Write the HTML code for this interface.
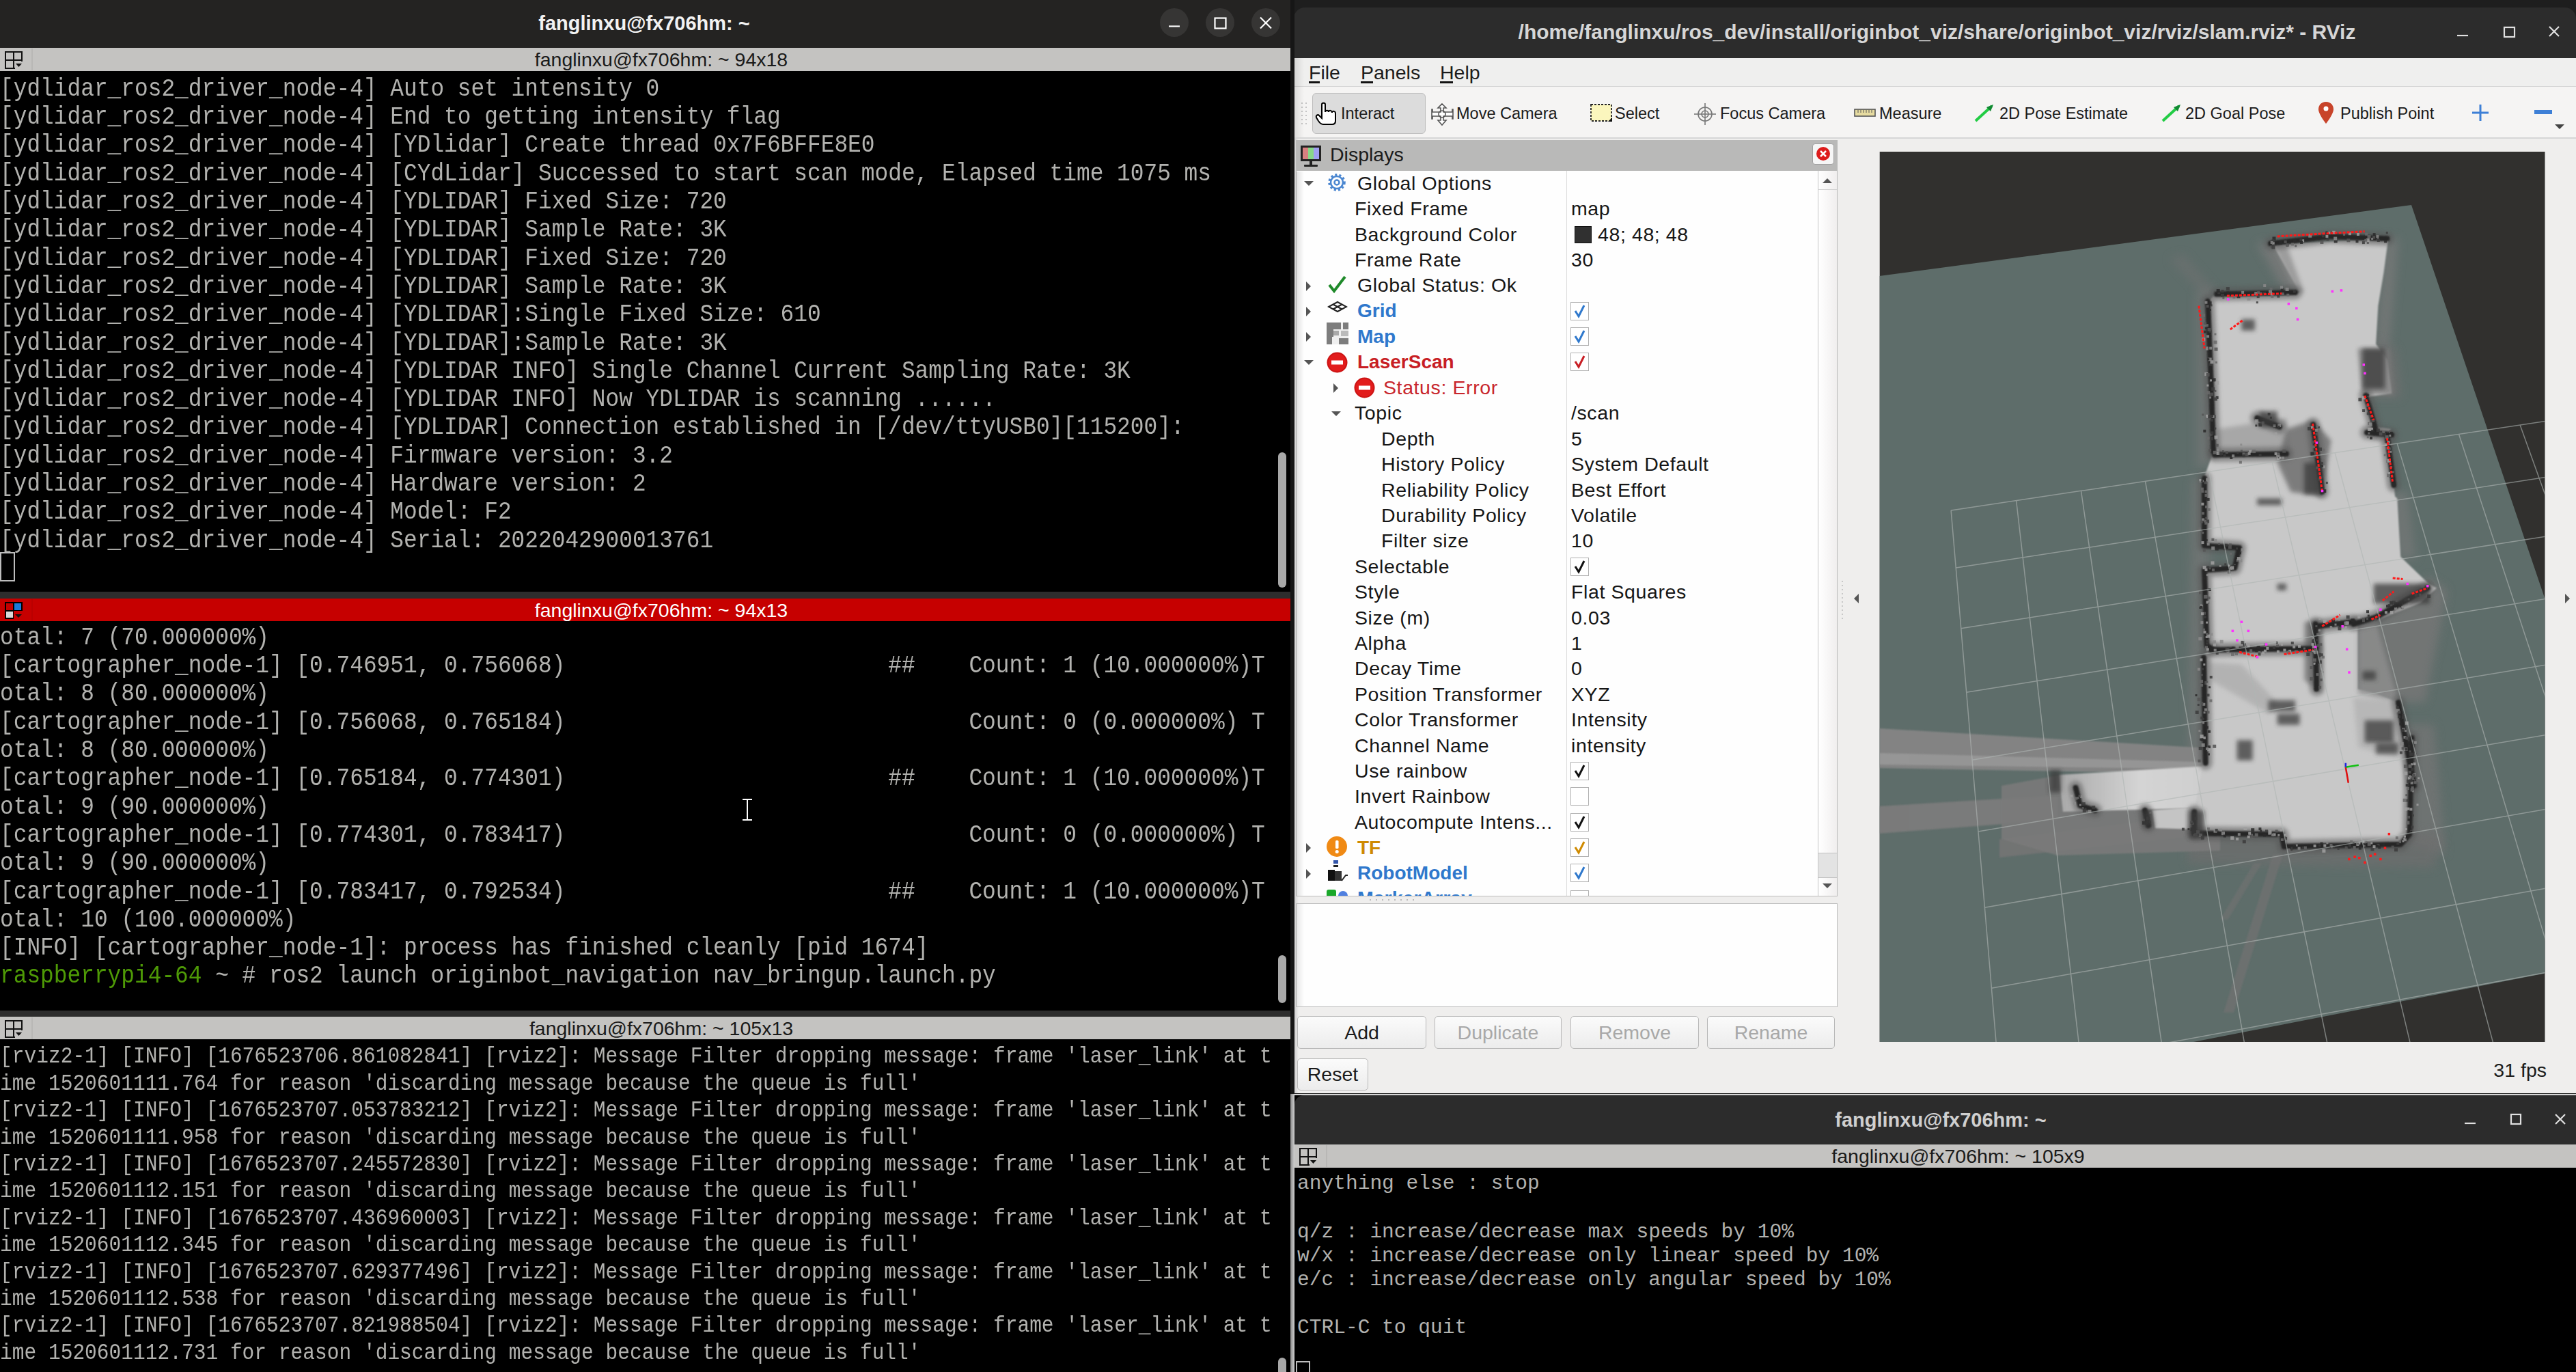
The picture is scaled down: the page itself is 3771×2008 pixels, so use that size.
<!DOCTYPE html><html><head><meta charset="utf-8"><style>html,body{margin:0;padding:0;width:3771px;height:2008px;overflow:hidden;background:#000;position:relative}div{box-sizing:border-box}</style></head><body><div style="position:absolute;left:0px;top:0px;width:1889px;height:70px;background:#242322"></div>
<div style="position:absolute;left:-1057px;width:4000px;text-align:center;top:19.95px;font:bold 29px/29px 'Liberation Sans', sans-serif;color:#f2f2f2;white-space:pre;">fanglinxu@fx706hm: ~</div>
<div style="position:absolute;left:1698px;top:12px;width:42px;height:42px;border-radius:50%;background:#363534"></div>
<div style="position:absolute;left:1765px;top:12px;width:42px;height:42px;border-radius:50%;background:#363534"></div>
<div style="position:absolute;left:1832px;top:12px;width:42px;height:42px;border-radius:50%;background:#363534"></div>
<svg style="position:absolute;left:0;top:0" width="1889" height="70"><g stroke="#ffffff" stroke-width="2.2" fill="none"><line x1="1711" y1="38.5" x2="1727" y2="38.5"/><rect x="1778.5" y="26.5" width="16" height="15"/><line x1="1845" y1="25.5" x2="1861" y2="41.5"/><line x1="1861" y1="25.5" x2="1845" y2="41.5"/></g></svg>
<div style="position:absolute;left:0px;top:70px;width:1889px;height:34px;background:#c4c3c1"></div>
<div style="position:absolute;left:46px;top:71px;width:2px;height:32px;background:rgba(0,0,0,0.06)"></div>
<svg style="position:absolute;left:7px;top:75px" width="28" height="28"><g stroke="#111" stroke-width="2" fill="none"><rect x="1" y="1" width="24" height="24"/><line x1="13" y1="1" x2="13" y2="25"/><line x1="1" y1="13" x2="25" y2="13"/></g><rect x="15" y="15" width="11" height="11" fill="#c4c3c1"/><path d="M16 18 L25 18 L20.5 23 Z" fill="#111"/></svg>
<div style="position:absolute;left:-1032.0px;width:4000px;text-align:center;top:72.87px;font:normal 28.5px/28.5px 'Liberation Sans', sans-serif;color:#1a1a1a;white-space:pre;">fanglinxu@fx706hm: ~ 94x18</div>
<div style="position:absolute;left:0px;top:104px;width:1889px;height:762px;background:#000"></div>
<div style="position:absolute;left:0px;top:115.83px;font:32.85px/32.85px 'Liberation Mono', monospace;letter-spacing:0px;color:#b2b2af;white-space:pre;transform:scaleY(1.1);transform-origin:0 25.17px;">[ydlidar_ros2_driver_node-4] Auto set intensity 0</div>
<div style="position:absolute;left:0px;top:157.13px;font:32.85px/32.85px 'Liberation Mono', monospace;letter-spacing:0px;color:#b2b2af;white-space:pre;transform:scaleY(1.1);transform-origin:0 25.17px;">[ydlidar_ros2_driver_node-4] End to getting intensity flag</div>
<div style="position:absolute;left:0px;top:198.43px;font:32.85px/32.85px 'Liberation Mono', monospace;letter-spacing:0px;color:#b2b2af;white-space:pre;transform:scaleY(1.1);transform-origin:0 25.17px;">[ydlidar_ros2_driver_node-4] [YDlidar] Create thread 0x7F6BFFE8E0</div>
<div style="position:absolute;left:0px;top:239.73px;font:32.85px/32.85px 'Liberation Mono', monospace;letter-spacing:0px;color:#b2b2af;white-space:pre;transform:scaleY(1.1);transform-origin:0 25.17px;">[ydlidar_ros2_driver_node-4] [CYdLidar] Successed to start scan mode, Elapsed time 1075 ms</div>
<div style="position:absolute;left:0px;top:281.03px;font:32.85px/32.85px 'Liberation Mono', monospace;letter-spacing:0px;color:#b2b2af;white-space:pre;transform:scaleY(1.1);transform-origin:0 25.17px;">[ydlidar_ros2_driver_node-4] [YDLIDAR] Fixed Size: 720</div>
<div style="position:absolute;left:0px;top:322.33px;font:32.85px/32.85px 'Liberation Mono', monospace;letter-spacing:0px;color:#b2b2af;white-space:pre;transform:scaleY(1.1);transform-origin:0 25.17px;">[ydlidar_ros2_driver_node-4] [YDLIDAR] Sample Rate: 3K</div>
<div style="position:absolute;left:0px;top:363.63px;font:32.85px/32.85px 'Liberation Mono', monospace;letter-spacing:0px;color:#b2b2af;white-space:pre;transform:scaleY(1.1);transform-origin:0 25.17px;">[ydlidar_ros2_driver_node-4] [YDLIDAR] Fixed Size: 720</div>
<div style="position:absolute;left:0px;top:404.93px;font:32.85px/32.85px 'Liberation Mono', monospace;letter-spacing:0px;color:#b2b2af;white-space:pre;transform:scaleY(1.1);transform-origin:0 25.17px;">[ydlidar_ros2_driver_node-4] [YDLIDAR] Sample Rate: 3K</div>
<div style="position:absolute;left:0px;top:446.23px;font:32.85px/32.85px 'Liberation Mono', monospace;letter-spacing:0px;color:#b2b2af;white-space:pre;transform:scaleY(1.1);transform-origin:0 25.17px;">[ydlidar_ros2_driver_node-4] [YDLIDAR]:Single Fixed Size: 610</div>
<div style="position:absolute;left:0px;top:487.53px;font:32.85px/32.85px 'Liberation Mono', monospace;letter-spacing:0px;color:#b2b2af;white-space:pre;transform:scaleY(1.1);transform-origin:0 25.17px;">[ydlidar_ros2_driver_node-4] [YDLIDAR]:Sample Rate: 3K</div>
<div style="position:absolute;left:0px;top:528.83px;font:32.85px/32.85px 'Liberation Mono', monospace;letter-spacing:0px;color:#b2b2af;white-space:pre;transform:scaleY(1.1);transform-origin:0 25.17px;">[ydlidar_ros2_driver_node-4] [YDLIDAR INFO] Single Channel Current Sampling Rate: 3K</div>
<div style="position:absolute;left:0px;top:570.13px;font:32.85px/32.85px 'Liberation Mono', monospace;letter-spacing:0px;color:#b2b2af;white-space:pre;transform:scaleY(1.1);transform-origin:0 25.17px;">[ydlidar_ros2_driver_node-4] [YDLIDAR INFO] Now YDLIDAR is scanning ......</div>
<div style="position:absolute;left:0px;top:611.43px;font:32.85px/32.85px 'Liberation Mono', monospace;letter-spacing:0px;color:#b2b2af;white-space:pre;transform:scaleY(1.1);transform-origin:0 25.17px;">[ydlidar_ros2_driver_node-4] [YDLIDAR] Connection established in [/dev/ttyUSB0][115200]:</div>
<div style="position:absolute;left:0px;top:652.73px;font:32.85px/32.85px 'Liberation Mono', monospace;letter-spacing:0px;color:#b2b2af;white-space:pre;transform:scaleY(1.1);transform-origin:0 25.17px;">[ydlidar_ros2_driver_node-4] Firmware version: 3.2</div>
<div style="position:absolute;left:0px;top:694.03px;font:32.85px/32.85px 'Liberation Mono', monospace;letter-spacing:0px;color:#b2b2af;white-space:pre;transform:scaleY(1.1);transform-origin:0 25.17px;">[ydlidar_ros2_driver_node-4] Hardware version: 2</div>
<div style="position:absolute;left:0px;top:735.33px;font:32.85px/32.85px 'Liberation Mono', monospace;letter-spacing:0px;color:#b2b2af;white-space:pre;transform:scaleY(1.1);transform-origin:0 25.17px;">[ydlidar_ros2_driver_node-4] Model: F2</div>
<div style="position:absolute;left:0px;top:776.63px;font:32.85px/32.85px 'Liberation Mono', monospace;letter-spacing:0px;color:#b2b2af;white-space:pre;transform:scaleY(1.1);transform-origin:0 25.17px;">[ydlidar_ros2_driver_node-4] Serial: 2022042900013761</div>
<div style="position:absolute;left:0px;top:808px;width:22px;height:43px;border:2px solid #bdbdbd"></div>
<div style="position:absolute;left:1871px;top:662px;width:12px;height:198px;border-radius:6px;background:#a8a8a8"></div>
<div style="position:absolute;left:0px;top:866px;width:1889px;height:10px;background:#2d2d2d"></div>
<div style="position:absolute;left:0px;top:876px;width:1889px;height:34px;background:#c60000"></div>
<div style="position:absolute;left:46px;top:877px;width:2px;height:32px;background:rgba(0,0,0,0.06)"></div>
<div style="position:absolute;left:7px;top:881px;width:26px;height:25px;background:#000"></div>
<div style="position:absolute;left:9px;top:883px;width:10px;height:10px;background:#c40000"></div>
<div style="position:absolute;left:21px;top:883px;width:10px;height:10px;background:#1a7ad8"></div>
<div style="position:absolute;left:9px;top:895px;width:10px;height:9px;background:#d8d8d8"></div>
<div style="position:absolute;left:20px;top:894px;width:14px;height:14px;background:#c60000"></div>
<svg style="position:absolute;left:21px;top:898px" width="12" height="8"><path d="M1 1 L11 1 L6 6 Z" fill="#111"/></svg>
<div style="position:absolute;left:-1032.0px;width:4000px;text-align:center;top:878.87px;font:normal 28.5px/28.5px 'Liberation Sans', sans-serif;color:#ffffff;white-space:pre;">fanglinxu@fx706hm: ~ 94x13</div>
<div style="position:absolute;left:0px;top:909px;width:1889px;height:570px;background:#000"></div>
<div style="position:absolute;left:0px;top:918.83px;font:32.85px/32.85px 'Liberation Mono', monospace;letter-spacing:0px;color:#b2b2af;white-space:pre;transform:scaleY(1.1);transform-origin:0 25.17px;">otal: 7 (70.000000%)</div>
<div style="position:absolute;left:0px;top:960.13px;font:32.85px/32.85px 'Liberation Mono', monospace;letter-spacing:0px;color:#b2b2af;white-space:pre;transform:scaleY(1.1);transform-origin:0 25.17px;">[cartographer_node-1] [0.746951, 0.756068)                        ##    Count: 1 (10.000000%)T</div>
<div style="position:absolute;left:0px;top:1001.43px;font:32.85px/32.85px 'Liberation Mono', monospace;letter-spacing:0px;color:#b2b2af;white-space:pre;transform:scaleY(1.1);transform-origin:0 25.17px;">otal: 8 (80.000000%)</div>
<div style="position:absolute;left:0px;top:1042.73px;font:32.85px/32.85px 'Liberation Mono', monospace;letter-spacing:0px;color:#b2b2af;white-space:pre;transform:scaleY(1.1);transform-origin:0 25.17px;">[cartographer_node-1] [0.756068, 0.765184)                              Count: 0 (0.000000%) T</div>
<div style="position:absolute;left:0px;top:1084.03px;font:32.85px/32.85px 'Liberation Mono', monospace;letter-spacing:0px;color:#b2b2af;white-space:pre;transform:scaleY(1.1);transform-origin:0 25.17px;">otal: 8 (80.000000%)</div>
<div style="position:absolute;left:0px;top:1125.33px;font:32.85px/32.85px 'Liberation Mono', monospace;letter-spacing:0px;color:#b2b2af;white-space:pre;transform:scaleY(1.1);transform-origin:0 25.17px;">[cartographer_node-1] [0.765184, 0.774301)                        ##    Count: 1 (10.000000%)T</div>
<div style="position:absolute;left:0px;top:1166.63px;font:32.85px/32.85px 'Liberation Mono', monospace;letter-spacing:0px;color:#b2b2af;white-space:pre;transform:scaleY(1.1);transform-origin:0 25.17px;">otal: 9 (90.000000%)</div>
<div style="position:absolute;left:0px;top:1207.93px;font:32.85px/32.85px 'Liberation Mono', monospace;letter-spacing:0px;color:#b2b2af;white-space:pre;transform:scaleY(1.1);transform-origin:0 25.17px;">[cartographer_node-1] [0.774301, 0.783417)                              Count: 0 (0.000000%) T</div>
<div style="position:absolute;left:0px;top:1249.23px;font:32.85px/32.85px 'Liberation Mono', monospace;letter-spacing:0px;color:#b2b2af;white-space:pre;transform:scaleY(1.1);transform-origin:0 25.17px;">otal: 9 (90.000000%)</div>
<div style="position:absolute;left:0px;top:1290.53px;font:32.85px/32.85px 'Liberation Mono', monospace;letter-spacing:0px;color:#b2b2af;white-space:pre;transform:scaleY(1.1);transform-origin:0 25.17px;">[cartographer_node-1] [0.783417, 0.792534)                        ##    Count: 1 (10.000000%)T</div>
<div style="position:absolute;left:0px;top:1331.83px;font:32.85px/32.85px 'Liberation Mono', monospace;letter-spacing:0px;color:#b2b2af;white-space:pre;transform:scaleY(1.1);transform-origin:0 25.17px;">otal: 10 (100.000000%)</div>
<div style="position:absolute;left:0px;top:1373.13px;font:32.85px/32.85px 'Liberation Mono', monospace;letter-spacing:0px;color:#b2b2af;white-space:pre;transform:scaleY(1.1);transform-origin:0 25.17px;">[INFO] [cartographer_node-1]: process has finished cleanly [pid 1674]</div>
<div style="position:absolute;left:0px;top:1414.43px;font:32.85px/32.85px 'Liberation Mono', monospace;letter-spacing:0px;color:#b2b2af;white-space:pre;transform:scaleY(1.1);transform-origin:0 25.17px;"><span style="color:#4e9a06">raspberrypi4-64</span><span style="color:#b2b2af"> ~ # ros2 launch originbot_navigation nav_bringup.launch.py</span></div>
<div style="position:absolute;left:1871px;top:1398px;width:12px;height:70px;border-radius:6px;background:#a8a8a8"></div>
<svg style="position:absolute;left:1084px;top:1168px" width="20" height="34"><path d="M3 2 H17 M10 2 V32 M3 32 H17" stroke="#000" stroke-width="5"/><path d="M3 2 H17 M10 2 V32 M3 32 H17" stroke="#fff" stroke-width="2"/></svg>
<div style="position:absolute;left:0px;top:1479px;width:1889px;height:9px;background:#2d2d2d"></div>
<div style="position:absolute;left:0px;top:1488px;width:1889px;height:34px;background:#c4c3c1"></div>
<div style="position:absolute;left:46px;top:1489px;width:2px;height:32px;background:rgba(0,0,0,0.06)"></div>
<svg style="position:absolute;left:7px;top:1493px" width="28" height="28"><g stroke="#111" stroke-width="2" fill="none"><rect x="1" y="1" width="24" height="24"/><line x1="13" y1="1" x2="13" y2="25"/><line x1="1" y1="13" x2="25" y2="13"/></g><rect x="15" y="15" width="11" height="11" fill="#c4c3c1"/><path d="M16 18 L25 18 L20.5 23 Z" fill="#111"/></svg>
<div style="position:absolute;left:-1032.0px;width:4000px;text-align:center;top:1490.87px;font:normal 28.5px/28.5px 'Liberation Sans', sans-serif;color:#1a1a1a;white-space:pre;">fanglinxu@fx706hm: ~ 105x13</div>
<div style="position:absolute;left:0px;top:1521px;width:1889px;height:487px;background:#000"></div>
<div style="position:absolute;left:0px;top:1533.36px;font:29.55px/29.55px 'Liberation Mono', monospace;letter-spacing:0px;color:#b2b2af;white-space:pre;transform:scaleY(1.1);transform-origin:0 22.64px;">[rviz2-1] [INFO] [1676523706.861082841] [rviz2]: Message Filter dropping message: frame &#x27;laser_link&#x27; at t</div>
<div style="position:absolute;left:0px;top:1572.76px;font:29.55px/29.55px 'Liberation Mono', monospace;letter-spacing:0px;color:#b2b2af;white-space:pre;transform:scaleY(1.1);transform-origin:0 22.64px;">ime 1520601111.764 for reason &#x27;discarding message because the queue is full&#x27;</div>
<div style="position:absolute;left:0px;top:1612.16px;font:29.55px/29.55px 'Liberation Mono', monospace;letter-spacing:0px;color:#b2b2af;white-space:pre;transform:scaleY(1.1);transform-origin:0 22.64px;">[rviz2-1] [INFO] [1676523707.053783212] [rviz2]: Message Filter dropping message: frame &#x27;laser_link&#x27; at t</div>
<div style="position:absolute;left:0px;top:1651.56px;font:29.55px/29.55px 'Liberation Mono', monospace;letter-spacing:0px;color:#b2b2af;white-space:pre;transform:scaleY(1.1);transform-origin:0 22.64px;">ime 1520601111.958 for reason &#x27;discarding message because the queue is full&#x27;</div>
<div style="position:absolute;left:0px;top:1690.96px;font:29.55px/29.55px 'Liberation Mono', monospace;letter-spacing:0px;color:#b2b2af;white-space:pre;transform:scaleY(1.1);transform-origin:0 22.64px;">[rviz2-1] [INFO] [1676523707.245572830] [rviz2]: Message Filter dropping message: frame &#x27;laser_link&#x27; at t</div>
<div style="position:absolute;left:0px;top:1730.36px;font:29.55px/29.55px 'Liberation Mono', monospace;letter-spacing:0px;color:#b2b2af;white-space:pre;transform:scaleY(1.1);transform-origin:0 22.64px;">ime 1520601112.151 for reason &#x27;discarding message because the queue is full&#x27;</div>
<div style="position:absolute;left:0px;top:1769.76px;font:29.55px/29.55px 'Liberation Mono', monospace;letter-spacing:0px;color:#b2b2af;white-space:pre;transform:scaleY(1.1);transform-origin:0 22.64px;">[rviz2-1] [INFO] [1676523707.436960003] [rviz2]: Message Filter dropping message: frame &#x27;laser_link&#x27; at t</div>
<div style="position:absolute;left:0px;top:1809.16px;font:29.55px/29.55px 'Liberation Mono', monospace;letter-spacing:0px;color:#b2b2af;white-space:pre;transform:scaleY(1.1);transform-origin:0 22.64px;">ime 1520601112.345 for reason &#x27;discarding message because the queue is full&#x27;</div>
<div style="position:absolute;left:0px;top:1848.56px;font:29.55px/29.55px 'Liberation Mono', monospace;letter-spacing:0px;color:#b2b2af;white-space:pre;transform:scaleY(1.1);transform-origin:0 22.64px;">[rviz2-1] [INFO] [1676523707.629377496] [rviz2]: Message Filter dropping message: frame &#x27;laser_link&#x27; at t</div>
<div style="position:absolute;left:0px;top:1887.96px;font:29.55px/29.55px 'Liberation Mono', monospace;letter-spacing:0px;color:#b2b2af;white-space:pre;transform:scaleY(1.1);transform-origin:0 22.64px;">ime 1520601112.538 for reason &#x27;discarding message because the queue is full&#x27;</div>
<div style="position:absolute;left:0px;top:1927.36px;font:29.55px/29.55px 'Liberation Mono', monospace;letter-spacing:0px;color:#b2b2af;white-space:pre;transform:scaleY(1.1);transform-origin:0 22.64px;">[rviz2-1] [INFO] [1676523707.821988504] [rviz2]: Message Filter dropping message: frame &#x27;laser_link&#x27; at t</div>
<div style="position:absolute;left:0px;top:1966.76px;font:29.55px/29.55px 'Liberation Mono', monospace;letter-spacing:0px;color:#b2b2af;white-space:pre;transform:scaleY(1.1);transform-origin:0 22.64px;">ime 1520601112.731 for reason &#x27;discarding message because the queue is full&#x27;</div>
<div style="position:absolute;left:1871px;top:1987px;width:12px;height:40px;border-radius:6px;background:#a8a8a8"></div>
<div style="position:absolute;left:1889px;top:0px;width:5px;height:2008px;background:#1c1c1c"></div>
<div style="position:absolute;left:1894px;top:0px;width:1877px;height:40px;background:#1e1e1e"></div>
<div style="position:absolute;left:1894px;top:11px;width:1877px;height:74px;background:#2c2c2c;border-radius:16px 16px 0 0"></div>
<div style="position:absolute;left:835.5px;width:4000px;text-align:center;top:32.11px;font:bold 30px/30px 'Liberation Sans', sans-serif;color:#d6d6d6;white-space:pre;">/home/fanglinxu/ros_dev/install/originbot_viz/share/originbot_viz/rviz/slam.rviz* - RViz</div>
<svg style="position:absolute;left:3580px;top:30px" width="191" height="40"><g stroke="#e0e0e0" stroke-width="2.2" fill="none"><line x1="17" y1="22" x2="33" y2="22"/><rect x="86" y="10" width="15" height="14"/><line x1="152" y1="9" x2="166" y2="23"/><line x1="166" y1="9" x2="152" y2="23"/></g></svg>
<div style="position:absolute;left:1894px;top:85px;width:1877px;height:1516px;background:#efeeed"></div>
<div style="position:absolute;left:1889px;top:0px;width:6px;height:1601px;background:#161616"></div>
<div style="position:absolute;left:1895px;top:85px;width:1876px;height:42px;background:#efefee"></div>
<div style="position:absolute;left:1895px;top:126px;width:1876px;height:1px;background:#d4d4d4"></div>
<div style="position:absolute;left:1916px;top:91.87px;font:normal 28.5px/28.5px 'Liberation Sans', sans-serif;color:#1b1b1b;white-space:pre;">File</div>
<div style="position:absolute;left:1992px;top:91.87px;font:normal 28.5px/28.5px 'Liberation Sans', sans-serif;color:#1b1b1b;white-space:pre;">Panels</div>
<div style="position:absolute;left:2108px;top:91.87px;font:normal 28.5px/28.5px 'Liberation Sans', sans-serif;color:#1b1b1b;white-space:pre;">Help</div>
<div style="position:absolute;left:1916px;top:119px;width:16px;height:3px;background:#111"></div>
<div style="position:absolute;left:1992px;top:119px;width:18px;height:3px;background:#111"></div>
<div style="position:absolute;left:2108px;top:119px;width:19px;height:3px;background:#111"></div>
<div style="position:absolute;left:1895px;top:127px;width:1876px;height:74px;background:#f5f4f3"></div>
<div style="position:absolute;left:1895px;top:201px;width:1876px;height:2px;background:#d6d6d6"></div>
<div style="position:absolute;left:1905px;top:150px;width:2px;height:2px;background:#c4c4c4"></div>
<div style="position:absolute;left:1911px;top:150px;width:2px;height:2px;background:#c4c4c4"></div>
<div style="position:absolute;left:1905px;top:156px;width:2px;height:2px;background:#c4c4c4"></div>
<div style="position:absolute;left:1911px;top:156px;width:2px;height:2px;background:#c4c4c4"></div>
<div style="position:absolute;left:1905px;top:162px;width:2px;height:2px;background:#c4c4c4"></div>
<div style="position:absolute;left:1911px;top:162px;width:2px;height:2px;background:#c4c4c4"></div>
<div style="position:absolute;left:1905px;top:168px;width:2px;height:2px;background:#c4c4c4"></div>
<div style="position:absolute;left:1911px;top:168px;width:2px;height:2px;background:#c4c4c4"></div>
<div style="position:absolute;left:1905px;top:174px;width:2px;height:2px;background:#c4c4c4"></div>
<div style="position:absolute;left:1911px;top:174px;width:2px;height:2px;background:#c4c4c4"></div>
<div style="position:absolute;left:1905px;top:180px;width:2px;height:2px;background:#c4c4c4"></div>
<div style="position:absolute;left:1911px;top:180px;width:2px;height:2px;background:#c4c4c4"></div>
<div style="position:absolute;left:1921px;top:136px;width:166px;height:60px;background:#dcdcdc;border:1.5px solid #bdbdbd;border-radius:6px"></div>
<div style="position:absolute;left:1963px;top:154.61px;font:normal 23.5px/23.5px 'Liberation Sans', sans-serif;color:#1b1b1b;white-space:pre;">Interact</div>
<div style="position:absolute;left:2132px;top:154.61px;font:normal 23.5px/23.5px 'Liberation Sans', sans-serif;color:#1b1b1b;white-space:pre;">Move Camera</div>
<div style="position:absolute;left:2364px;top:154.61px;font:normal 23.5px/23.5px 'Liberation Sans', sans-serif;color:#1b1b1b;white-space:pre;">Select</div>
<div style="position:absolute;left:2518px;top:154.61px;font:normal 23.5px/23.5px 'Liberation Sans', sans-serif;color:#1b1b1b;white-space:pre;">Focus Camera</div>
<div style="position:absolute;left:2751px;top:154.61px;font:normal 23.5px/23.5px 'Liberation Sans', sans-serif;color:#1b1b1b;white-space:pre;">Measure</div>
<div style="position:absolute;left:2927px;top:154.61px;font:normal 23.5px/23.5px 'Liberation Sans', sans-serif;color:#1b1b1b;white-space:pre;">2D Pose Estimate</div>
<div style="position:absolute;left:3199px;top:154.61px;font:normal 23.5px/23.5px 'Liberation Sans', sans-serif;color:#1b1b1b;white-space:pre;">2D Goal Pose</div>
<div style="position:absolute;left:3426px;top:154.61px;font:normal 23.5px/23.5px 'Liberation Sans', sans-serif;color:#1b1b1b;white-space:pre;">Publish Point</div>
<svg style="position:absolute;left:1895px;top:127px" width="1876" height="74">
<g transform="translate(31,22)">
<path d="M9 4 C9 1 14 1 14 4 L14 15 C14 12 19 12 19 15 C19 12 24 12 24 16 C24 13 29 13 29 17 L29 28 C29 31 27 33 24 33 L11 33 C8 33 6 31 4 28 L1 23 C0 20 3 18 5 20 L9 24 Z" fill="#fff" stroke="#000" stroke-width="2"/>
</g>
<g transform="translate(201,25)" stroke="#555" stroke-width="1.6" fill="#fff">
<path d="M15 0 L21 6 L17 6 L17 12 L30 12 L30 8 L31 8 L31 22 L30 22 L30 18 L17 18 L17 24 L21 24 L15 31 L9 24 L13 24 L13 18 L1 18 L1 22 L0 22 L0 8 L1 8 L1 12 L13 12 L13 6 L9 6 Z"/>
<circle cx="15" cy="15" r="5" fill="none"/>
</g>
<g transform="translate(433,25)">
<rect x="1" y="1" width="30" height="24" fill="#fbf6bd" stroke="#222" stroke-width="1.8" stroke-dasharray="3 2"/>
<path d="M26 26 L32 26 L32 20 Z" fill="#111"/>
</g>
<g transform="translate(585,24)" stroke="#777" stroke-width="1.6" fill="none">
<circle cx="16" cy="16" r="10"/><circle cx="16" cy="16" r="5"/>
<line x1="16" y1="0" x2="16" y2="32"/><line x1="0" y1="16" x2="32" y2="16"/>
</g>
<g transform="translate(819,32)">
<rect x="1" y="1" width="30" height="10" fill="#e6dba0" stroke="#555" stroke-width="1.6"/>
<path d="M6 2 V6 M10 2 V6 M14 2 V6 M18 2 V6 M22 2 V6 M26 2 V6" stroke="#555" stroke-width="1"/>
</g>
<g transform="translate(995,26)">
<line x1="2" y1="24" x2="26" y2="2" stroke="#22cc44" stroke-width="4"/>
<path d="M28 0 L18 4 L24 10 Z" fill="#118833"/>
</g>
<g transform="translate(1269,26)">
<line x1="2" y1="24" x2="26" y2="2" stroke="#22cc44" stroke-width="4"/>
<path d="M28 0 L18 4 L24 10 Z" fill="#118833"/>
</g>
<g transform="translate(1499,22)">
<path d="M11 0 C4 0 0 5 0 11 C0 18 11 32 11 32 C11 32 22 18 22 11 C22 5 18 0 11 0 Z" fill="#c8442a"/>
<circle cx="11" cy="10" r="3.5" fill="#fff"/>
</g>
<g transform="translate(1720,22)" stroke="#3d7fd6" stroke-width="3" fill="none">
<path d="M16 4 V28 M4 16 H28"/>
</g>
<g transform="translate(1815,34)"><rect x="0" y="0" width="26" height="6" fill="#3d7fd6"/></g>
<path d="M1845 55 L1859 55 L1852 62 Z" fill="#444"/>
</svg>
<div style="position:absolute;left:1895px;top:203px;width:6px;height:1398px;background:linear-gradient(to right,#cfcfcf,#efeeed)"></div>
<div style="position:absolute;left:1897px;top:205px;width:793px;height:45px;background:#b9b9b8"></div>
<svg style="position:absolute;left:1903px;top:212px" width="32" height="34">
<rect x="1" y="1" width="30" height="23" fill="#222"/><rect x="4" y="4" width="8" height="17" fill="#d88080"/><rect x="12" y="4" width="8" height="17" fill="#88d888"/><rect x="20" y="4" width="8" height="17" fill="#a0a0f0"/>
<rect x="14" y="24" width="4" height="5" fill="#222"/><rect x="6" y="29" width="20" height="3" rx="1" fill="#222"/></svg>
<div style="position:absolute;left:1947px;top:211.87px;font:normal 28.5px/28.5px 'Liberation Sans', sans-serif;color:#1b1b1b;white-space:pre;">Displays</div>
<div style="position:absolute;left:2653px;top:210px;width:32px;height:31px;background:#f6f6f6;border:1px solid #a0a0a0;border-radius:4px"></div>
<svg style="position:absolute;left:2656px;top:212px" width="26" height="26"><circle cx="13" cy="13" r="10" fill="#dd1c1c"/><path d="M9 9 L17 17 M17 9 L9 17" stroke="#fff" stroke-width="2.5"/></svg>
<div style="position:absolute;left:1897px;top:250px;width:793px;height:1062px;background:#fefefe;border:1px solid #bcbcbc;border-top:none"></div>
<div style="position:absolute;left:2293px;top:250px;width:1px;height:1061px;background:#dcdcdc"></div>
<div style="position:absolute;left:2661px;top:250px;width:28px;height:1061px;background:linear-gradient(to right,#ffffff,#f0eeee);border-left:1px solid #c4c4c4"></div>
<div style="position:absolute;left:2661px;top:277px;width:28px;height:1px;background:#cfcfcf"></div>
<svg style="position:absolute;left:2664px;top:255px" width="22" height="18"><path d="M4 13 L18 13 L11 6 Z" fill="#555"/></svg>
<div style="position:absolute;left:2661px;top:1248px;width:28px;height:37px;background:#e3e3e3;border-top:1px solid #c0c0c0;border-bottom:1px solid #c0c0c0;border-left:1px solid #c4c4c4"></div>
<svg style="position:absolute;left:2664px;top:1288px" width="22" height="18"><path d="M4 5 L18 5 L11 12 Z" fill="#555"/></svg>
<svg style="position:absolute;left:1908px;top:261.0px" width="16" height="16"><path d="M1 4 L15 4 L8 11 Z" fill="#555"/></svg>
<svg style="position:absolute;left:1944px;top:254.0px" width="28" height="28"><g fill="none" stroke="#4a86d0" stroke-width="2.5"><circle cx="13" cy="13" r="9"/><circle cx="13" cy="13" r="3.5"/></g><g stroke="#4a86d0" stroke-width="3.5" stroke-dasharray="3 3.1"><circle cx="13" cy="13" r="11" fill="none"/></g></svg>
<div style="position:absolute;left:1987px;top:253.87px;font:normal 28.5px/28.5px 'Liberation Sans', sans-serif;color:#161616;white-space:pre;letter-spacing:0.6px">Global Options</div>
<div style="position:absolute;left:1983px;top:291.27px;font:normal 28.5px/28.5px 'Liberation Sans', sans-serif;color:#161616;white-space:pre;letter-spacing:0.6px">Fixed Frame</div>
<div style="position:absolute;left:2300px;top:291.27px;font:normal 28.5px/28.5px 'Liberation Sans', sans-serif;color:#161616;white-space:pre;letter-spacing:0.6px">map</div>
<div style="position:absolute;left:1983px;top:328.67px;font:normal 28.5px/28.5px 'Liberation Sans', sans-serif;color:#161616;white-space:pre;letter-spacing:0.6px">Background Color</div>
<div style="position:absolute;left:1983px;top:366.07px;font:normal 28.5px/28.5px 'Liberation Sans', sans-serif;color:#161616;white-space:pre;letter-spacing:0.6px">Frame Rate</div>
<div style="position:absolute;left:2300px;top:366.07px;font:normal 28.5px/28.5px 'Liberation Sans', sans-serif;color:#161616;white-space:pre;letter-spacing:0.6px">30</div>
<div style="position:absolute;left:2305px;top:331px;width:25px;height:25px;background:#303030;border:1.5px solid #111"></div>
<div style="position:absolute;left:2339px;top:328.67px;font:normal 28.5px/28.5px 'Liberation Sans', sans-serif;color:#161616;white-space:pre;letter-spacing:0.6px">48; 48; 48</div>
<svg style="position:absolute;left:1908px;top:410.6px" width="16" height="16"><path d="M4 1 L11 8 L4 15 Z" fill="#555"/></svg>
<svg style="position:absolute;left:1944px;top:401.6px" width="28" height="28"><path d="M2 15 L9 24 L25 3" stroke="#1f8a2a" stroke-width="4" fill="none"/></svg>
<div style="position:absolute;left:1987px;top:403.47px;font:normal 28.5px/28.5px 'Liberation Sans', sans-serif;color:#161616;white-space:pre;letter-spacing:0.6px">Global Status: Ok</div>
<svg style="position:absolute;left:1908px;top:448.0px" width="16" height="16"><path d="M4 1 L11 8 L4 15 Z" fill="#555"/></svg>
<svg style="position:absolute;left:1943px;top:439.0px" width="30" height="24"><g fill="none" stroke="#222" stroke-width="2"><path d="M2 10 L15 3 L28 10 L15 17 Z"/><path d="M8.5 6.5 L21.5 13.5 M21.5 6.5 L8.5 13.5"/></g></svg>
<div style="position:absolute;left:1987px;top:441.30px;font:bold 28px/28px 'Liberation Sans', sans-serif;color:#2f78cc;white-space:pre;">Grid</div>
<div style="position:absolute;left:2299px;top:441.5px;width:27px;height:27px;background:#fff;border:1.5px solid #b0b0b0"></div>
<svg style="position:absolute;left:2299px;top:441.5px" width="27" height="27"><path d="M7 13 L12 21 L20 5" stroke="#2f78cc" stroke-width="3" fill="none"/></svg>
<svg style="position:absolute;left:1908px;top:485.4px" width="16" height="16"><path d="M4 1 L11 8 L4 15 Z" fill="#555"/></svg>
<svg style="position:absolute;left:1942px;top:472.4px" width="32" height="32"><rect x="0" y="0" width="32" height="32" fill="#efefef"/><g fill="#7d7d7d"><rect x="0" y="0" width="10" height="10"/><rect x="10" y="0" width="11" height="10"/><rect x="24" y="0" width="8" height="10"/><rect x="0" y="10" width="10" height="11"/><rect x="21" y="12" width="11" height="8" fill="#bbb"/><rect x="0" y="21" width="8" height="11"/><rect x="18" y="23" width="14" height="9"/><rect x="10" y="12" width="8" height="7" fill="#aaa"/></g></svg>
<div style="position:absolute;left:1987px;top:478.70px;font:bold 28px/28px 'Liberation Sans', sans-serif;color:#2f78cc;white-space:pre;">Map</div>
<div style="position:absolute;left:2299px;top:478.9px;width:27px;height:27px;background:#fff;border:1.5px solid #b0b0b0"></div>
<svg style="position:absolute;left:2299px;top:478.9px" width="27" height="27"><path d="M7 13 L12 21 L20 5" stroke="#2f78cc" stroke-width="3" fill="none"/></svg>
<svg style="position:absolute;left:1908px;top:522.8px" width="16" height="16"><path d="M1 4 L15 4 L8 11 Z" fill="#555"/></svg>
<svg style="position:absolute;left:1942px;top:514.8px" width="32" height="32"><circle cx="15.5" cy="15.5" r="15" fill="#cc1414"/><circle cx="15.5" cy="15.5" r="13" fill="#e21c1c"/><rect x="7" y="12.5" width="17" height="6" fill="#fff"/></svg>
<div style="position:absolute;left:1987px;top:516.10px;font:bold 28px/28px 'Liberation Sans', sans-serif;color:#c81e24;white-space:pre;">LaserScan</div>
<div style="position:absolute;left:2299px;top:516.3px;width:27px;height:27px;background:#fff;border:1.5px solid #b0b0b0"></div>
<svg style="position:absolute;left:2299px;top:516.3px" width="27" height="27"><path d="M7 13 L12 21 L20 5" stroke="#c81e24" stroke-width="3" fill="none"/></svg>
<svg style="position:absolute;left:1948px;top:560.2px" width="16" height="16"><path d="M4 1 L11 8 L4 15 Z" fill="#555"/></svg>
<svg style="position:absolute;left:1982px;top:552.2px" width="32" height="32"><circle cx="15.5" cy="15.5" r="15" fill="#cc1414"/><circle cx="15.5" cy="15.5" r="13" fill="#e21c1c"/><rect x="7" y="12.5" width="17" height="6" fill="#fff"/></svg>
<div style="position:absolute;left:2025px;top:553.07px;font:normal 28.5px/28.5px 'Liberation Sans', sans-serif;color:#c8262c;white-space:pre;letter-spacing:0.6px">Status: Error</div>
<svg style="position:absolute;left:1948px;top:597.5999999999999px" width="16" height="16"><path d="M1 4 L15 4 L8 11 Z" fill="#555"/></svg>
<div style="position:absolute;left:1983px;top:590.47px;font:normal 28.5px/28.5px 'Liberation Sans', sans-serif;color:#161616;white-space:pre;letter-spacing:0.6px">Topic</div>
<div style="position:absolute;left:2300px;top:590.47px;font:normal 28.5px/28.5px 'Liberation Sans', sans-serif;color:#161616;white-space:pre;letter-spacing:0.6px">/scan</div>
<div style="position:absolute;left:2022px;top:627.87px;font:normal 28.5px/28.5px 'Liberation Sans', sans-serif;color:#161616;white-space:pre;letter-spacing:0.6px">Depth</div>
<div style="position:absolute;left:2300px;top:627.87px;font:normal 28.5px/28.5px 'Liberation Sans', sans-serif;color:#161616;white-space:pre;letter-spacing:0.6px">5</div>
<div style="position:absolute;left:2022px;top:665.27px;font:normal 28.5px/28.5px 'Liberation Sans', sans-serif;color:#161616;white-space:pre;letter-spacing:0.6px">History Policy</div>
<div style="position:absolute;left:2300px;top:665.27px;font:normal 28.5px/28.5px 'Liberation Sans', sans-serif;color:#161616;white-space:pre;letter-spacing:0.6px">System Default</div>
<div style="position:absolute;left:2022px;top:702.67px;font:normal 28.5px/28.5px 'Liberation Sans', sans-serif;color:#161616;white-space:pre;letter-spacing:0.6px">Reliability Policy</div>
<div style="position:absolute;left:2300px;top:702.67px;font:normal 28.5px/28.5px 'Liberation Sans', sans-serif;color:#161616;white-space:pre;letter-spacing:0.6px">Best Effort</div>
<div style="position:absolute;left:2022px;top:740.07px;font:normal 28.5px/28.5px 'Liberation Sans', sans-serif;color:#161616;white-space:pre;letter-spacing:0.6px">Durability Policy</div>
<div style="position:absolute;left:2300px;top:740.07px;font:normal 28.5px/28.5px 'Liberation Sans', sans-serif;color:#161616;white-space:pre;letter-spacing:0.6px">Volatile</div>
<div style="position:absolute;left:2022px;top:777.47px;font:normal 28.5px/28.5px 'Liberation Sans', sans-serif;color:#161616;white-space:pre;letter-spacing:0.6px">Filter size</div>
<div style="position:absolute;left:2300px;top:777.47px;font:normal 28.5px/28.5px 'Liberation Sans', sans-serif;color:#161616;white-space:pre;letter-spacing:0.6px">10</div>
<div style="position:absolute;left:1983px;top:814.87px;font:normal 28.5px/28.5px 'Liberation Sans', sans-serif;color:#161616;white-space:pre;letter-spacing:0.6px">Selectable</div>
<div style="position:absolute;left:2299px;top:815.5px;width:27px;height:27px;background:#fff;border:1.5px solid #b0b0b0"></div>
<svg style="position:absolute;left:2299px;top:815.5px" width="27" height="27"><path d="M7 13 L12 21 L20 5" stroke="#111" stroke-width="3" fill="none"/></svg>
<div style="position:absolute;left:1983px;top:852.27px;font:normal 28.5px/28.5px 'Liberation Sans', sans-serif;color:#161616;white-space:pre;letter-spacing:0.6px">Style</div>
<div style="position:absolute;left:2300px;top:852.27px;font:normal 28.5px/28.5px 'Liberation Sans', sans-serif;color:#161616;white-space:pre;letter-spacing:0.6px">Flat Squares</div>
<div style="position:absolute;left:1983px;top:889.67px;font:normal 28.5px/28.5px 'Liberation Sans', sans-serif;color:#161616;white-space:pre;letter-spacing:0.6px">Size (m)</div>
<div style="position:absolute;left:2300px;top:889.67px;font:normal 28.5px/28.5px 'Liberation Sans', sans-serif;color:#161616;white-space:pre;letter-spacing:0.6px">0.03</div>
<div style="position:absolute;left:1983px;top:927.07px;font:normal 28.5px/28.5px 'Liberation Sans', sans-serif;color:#161616;white-space:pre;letter-spacing:0.6px">Alpha</div>
<div style="position:absolute;left:2300px;top:927.07px;font:normal 28.5px/28.5px 'Liberation Sans', sans-serif;color:#161616;white-space:pre;letter-spacing:0.6px">1</div>
<div style="position:absolute;left:1983px;top:964.47px;font:normal 28.5px/28.5px 'Liberation Sans', sans-serif;color:#161616;white-space:pre;letter-spacing:0.6px">Decay Time</div>
<div style="position:absolute;left:2300px;top:964.47px;font:normal 28.5px/28.5px 'Liberation Sans', sans-serif;color:#161616;white-space:pre;letter-spacing:0.6px">0</div>
<div style="position:absolute;left:1983px;top:1001.87px;font:normal 28.5px/28.5px 'Liberation Sans', sans-serif;color:#161616;white-space:pre;letter-spacing:0.6px">Position Transformer</div>
<div style="position:absolute;left:2300px;top:1001.87px;font:normal 28.5px/28.5px 'Liberation Sans', sans-serif;color:#161616;white-space:pre;letter-spacing:0.6px">XYZ</div>
<div style="position:absolute;left:1983px;top:1039.27px;font:normal 28.5px/28.5px 'Liberation Sans', sans-serif;color:#161616;white-space:pre;letter-spacing:0.6px">Color Transformer</div>
<div style="position:absolute;left:2300px;top:1039.27px;font:normal 28.5px/28.5px 'Liberation Sans', sans-serif;color:#161616;white-space:pre;letter-spacing:0.6px">Intensity</div>
<div style="position:absolute;left:1983px;top:1076.67px;font:normal 28.5px/28.5px 'Liberation Sans', sans-serif;color:#161616;white-space:pre;letter-spacing:0.6px">Channel Name</div>
<div style="position:absolute;left:2300px;top:1076.67px;font:normal 28.5px/28.5px 'Liberation Sans', sans-serif;color:#161616;white-space:pre;letter-spacing:0.6px">intensity</div>
<div style="position:absolute;left:1983px;top:1114.07px;font:normal 28.5px/28.5px 'Liberation Sans', sans-serif;color:#161616;white-space:pre;letter-spacing:0.6px">Use rainbow</div>
<div style="position:absolute;left:2299px;top:1114.6999999999998px;width:27px;height:27px;background:#fff;border:1.5px solid #b0b0b0"></div>
<svg style="position:absolute;left:2299px;top:1114.6999999999998px" width="27" height="27"><path d="M7 13 L12 21 L20 5" stroke="#111" stroke-width="3" fill="none"/></svg>
<div style="position:absolute;left:1983px;top:1151.47px;font:normal 28.5px/28.5px 'Liberation Sans', sans-serif;color:#161616;white-space:pre;letter-spacing:0.6px">Invert Rainbow</div>
<div style="position:absolute;left:2299px;top:1152.1px;width:27px;height:27px;background:#fff;border:1.5px solid #b0b0b0"></div>
<div style="position:absolute;left:1983px;top:1188.87px;font:normal 28.5px/28.5px 'Liberation Sans', sans-serif;color:#161616;white-space:pre;letter-spacing:0.6px">Autocompute Intens...</div>
<div style="position:absolute;left:2299px;top:1189.5px;width:27px;height:27px;background:#fff;border:1.5px solid #b0b0b0"></div>
<svg style="position:absolute;left:2299px;top:1189.5px" width="27" height="27"><path d="M7 13 L12 21 L20 5" stroke="#111" stroke-width="3" fill="none"/></svg>
<svg style="position:absolute;left:1908px;top:1233.4px" width="16" height="16"><path d="M4 1 L11 8 L4 15 Z" fill="#555"/></svg>
<svg style="position:absolute;left:1942px;top:1224.4px" width="32" height="32"><circle cx="15" cy="15" r="15" fill="#f08a14"/><rect x="13" y="6" width="4.5" height="12" rx="1.5" fill="#fff"/><circle cx="15.2" cy="22.5" r="2.5" fill="#fff"/></svg>
<div style="position:absolute;left:1987px;top:1226.70px;font:bold 28px/28px 'Liberation Sans', sans-serif;color:#cf8a00;white-space:pre;">TF</div>
<div style="position:absolute;left:2299px;top:1226.9px;width:27px;height:27px;background:#fff;border:1.5px solid #b0b0b0"></div>
<svg style="position:absolute;left:2299px;top:1226.9px" width="27" height="27"><path d="M7 13 L12 21 L20 5" stroke="#cf8a00" stroke-width="3" fill="none"/></svg>
<svg style="position:absolute;left:1908px;top:1270.8px" width="16" height="16"><path d="M4 1 L11 8 L4 15 Z" fill="#555"/></svg>
<svg style="position:absolute;left:1942px;top:1258.8px" width="34" height="32"><rect x="10" y="0" width="7" height="5" fill="#3355aa"/><rect x="10" y="7" width="7" height="3" fill="#222"/><rect x="2" y="14" width="10" height="16" fill="#111"/><rect x="12" y="16" width="10" height="14" fill="#333"/><path d="M22 30 L28 22 L31 22" stroke="#222" stroke-width="2" fill="none"/></svg>
<div style="position:absolute;left:1987px;top:1264.10px;font:bold 28px/28px 'Liberation Sans', sans-serif;color:#2f78cc;white-space:pre;">RobotModel</div>
<div style="position:absolute;left:2299px;top:1264.3px;width:27px;height:27px;background:#fff;border:1.5px solid #b0b0b0"></div>
<svg style="position:absolute;left:2299px;top:1264.3px" width="27" height="27"><path d="M7 13 L12 21 L20 5" stroke="#2f78cc" stroke-width="3" fill="none"/></svg>
<div style="position:absolute;left:1897px;top:1298px;width:395px;height:13px;overflow:hidden"><div style="position:absolute;left:45px;top:4px;width:14px;height:14px;background:#1aa82a;border-radius:3px"></div><div style="position:absolute;left:62px;top:6px;width:14px;height:14px;background:#5080e0;border-radius:50%"></div><div style="position:absolute;left:90px;top:2px;font:bold 28.5px/28.5px 'Liberation Sans',sans-serif;color:#2f78cc;white-space:pre">MarkerArray</div></div>
<div style="position:absolute;left:2299px;top:1303px;width:27px;height:8px;border:1.5px solid #b0b0b0;border-bottom:none;background:#fff"></div>
<svg style="position:absolute;left:0;top:0" width="3771" height="2008" viewBox="0 0 3771 2008"><defs><clipPath id="vc"><rect x="2751.7" y="222" width="973.8000000000002" height="1303"/></clipPath><filter id="b1" filterUnits="userSpaceOnUse" x="2700" y="200" width="1100" height="1400"><feGaussianBlur stdDeviation="1.2"/></filter><filter id="b3" filterUnits="userSpaceOnUse" x="2700" y="200" width="1100" height="1400"><feGaussianBlur stdDeviation="3"/></filter><filter id="b6" filterUnits="userSpaceOnUse" x="2700" y="200" width="1100" height="1400"><feGaussianBlur stdDeviation="7"/></filter><linearGradient id="rayg" x1="0" x2="1" y1="0" y2="0"><stop offset="0" stop-color="#a8a8a8"/><stop offset="0.5" stop-color="#d4d4d4"/><stop offset="1" stop-color="#cdcdcd"/></linearGradient></defs><rect x="2751.7" y="222" width="973.8000000000002" height="1303" fill="#31302e"/><g clip-path="url(#vc)"><polygon points="2700,410.8 3530,300 3725.4,876 3790,1070 3790,1412 3211,1525 2700,1525" fill="#5e6d6a"/><polygon points="3304.2,355.8 3333.7,354.1 3376.4,429.6 3346.9,431.2" fill="#7a7a7a" opacity="0.8" filter="url(#b6)"/><polygon points="3491.2,345.9 3510.9,349.2 3497.8,510.0 3478.1,506.7" fill="#7a7a7a" opacity="0.7" filter="url(#b6)"/><polygon points="3478.1,496.9 3507.6,510.0 3514.2,582.2 3465.0,582.2" fill="#707070" opacity="0.8" filter="url(#b6)"/><polygon points="3215.6,424.7 3245.1,421.4 3248.4,674.0 3215.6,687.1" fill="#787878" opacity="0.6" filter="url(#b6)"/><polygon points="3209.1,700.0 3235.3,700.0 3235.3,1126.5 3202.5,1126.5" fill="#787878" opacity="0.6" filter="url(#b6)"/><polygon points="3445.3,910.0 3478.1,900.1 3556.8,844.4 3583.1,864.0 3550.3,1028.1 3510.9,1028.1 3445.3,1015.0" fill="#777777" opacity="0.8" filter="url(#b6)"/><polygon points="3497.8,719.7 3524.0,719.7 3537.1,818.1 3510.9,818.1" fill="#7a7a7a" opacity="0.6" filter="url(#b6)"/><polygon points="3517.5,1060.3 3563.4,1060.3 3579.8,1250.6 3524.0,1234.2" fill="#767676" opacity="0.7" filter="url(#b6)"/><polygon points="3202.5,1211.2 3527.3,1214.5 3576.5,1224.4 3563.4,1270.3 3202.5,1263.7" fill="#6e6e6e" opacity="0.7" filter="url(#b6)"/><polygon points="3176.2,378.7 3195.9,372.2 3245.1,428.0 3225.5,431.2" fill="#727272" opacity="0.5" filter="url(#b6)"/><polygon points="2751,1066 3250,1096 3250,1133 2751,1124" fill="#858585" opacity="0.95" filter="url(#b1)"/><polygon points="2751,1102 3250,1116 3250,1126 2751,1119" fill="#989898" opacity="0.9" filter="url(#b1)"/><polygon points="2751,1180 3012,1164 3012,1200 2751,1220" fill="#7b7b7b" opacity="0.95" filter="url(#b1)"/><polygon points="2927,1228 3250,1188 3250,1220 2927,1255" fill="#747474" opacity="0.9" filter="url(#b1)"/><polygon points="2930,1150 3012,1135 3250,1175 3250,1245 3012,1252 2930,1228" fill="#7a7a7a" opacity="0.9" filter="url(#b1)"/><polygon points="3327.2,1250.6 3341.9,1250.6 3269.8,1481.9 3255.0,1481.9" fill="#727272" opacity="0.7" filter="url(#b1)"/><polygon points="3299.3,1263.7 3310.8,1263.7 3261.5,1345.7 3250.1,1345.7" fill="#727272" opacity="0.6" filter="url(#b1)"/><polygon points="3014,1134 3250,1120 3250,1182 3020,1188" fill="url(#rayg)" filter="url(#b1)"/><polygon points="3150,1186 3250,1178 3250,1215 3155,1212" fill="#c4c4c4" filter="url(#b1)"/><polygon points="3327.2,357.4 3496.1,349.2 3489.6,398.4 3481.4,447.6 3478.1,503.4 3494.5,526.4 3501.0,575.6 3468.2,580.5 3474.8,624.8 3499.4,628.1 3497.8,641.2 3506.0,726.5 3509.3,729.5 3514.2,814.8 3555.2,854.2 3566.7,860.8 3543.7,882.1 3478.1,908.3 3451.8,913.3 3451.8,1008.4 3478.1,1015.0 3510.9,1028.1 3532.2,1150.1 3527.3,1221.1 3514.2,1234.2 3343.6,1237.5 3340.3,1221.1 3212.3,1217.8 3212.3,1185.0 3225.5,1116.1 3228.7,1116.7 3225.5,962.5 3233.7,949.3 3228.7,944.4 3227.1,834.5 3271.4,831.2 3278.0,801.7 3227.1,798.4 3226.1,699.9 3238.6,665.8 3232.0,441.1 3245.1,429.6 3366.5,428.0" fill="#c8c8c8" filter="url(#b1)"/><polygon points="3245.1,628.1 3346.9,611.7 3353.4,660.9 3245.1,664.2" fill="#9a9a9a" opacity="0.7" filter="url(#b3)"/><polygon points="3346.9,628.1 3386.2,615.0 3412.5,644.5 3399.3,726.5 3353.4,719.9 3333.7,677.3" fill="#6a6a6a" opacity="0.8" filter="url(#b3)"/><polygon points="3327.2,357.4 3346.9,357.4 3373.1,428.0 3360.0,428.0" fill="#8a8a8a" opacity="0.7" filter="url(#b3)"/><polygon points="3451.8,510.0 3497.8,510.0 3504.3,578.9 3458.4,575.6" fill="#7a7a7a" opacity="0.8" filter="url(#b3)"/><polygon points="3232.0,969.0 3281.2,972.3 3333.7,1028.1 3320.6,1044.5 3235.3,995.3" fill="#aaaaaa" opacity="0.7" filter="url(#b3)"/><polygon points="3373.1,910.0 3399.3,910.0 3399.3,1015.0 3373.1,995.3" fill="#6e6e6e" opacity="0.7" filter="url(#b3)"/><polygon points="3451.8,913.3 3478.1,910.0 3510.9,1028.1 3451.8,1015.0" fill="#8e8e8e" opacity="0.8" filter="url(#b3)"/><polygon points="3445.3,1021.5 3510.9,1024.8 3510.9,1110.1 3451.8,1093.7" fill="#b0b0b0" opacity="0.7" filter="url(#b3)"/><polyline points="3232.0,441.1 3236.9,562.5 3240.2,660.9" fill="none" stroke="#555" stroke-width="20" stroke-linejoin="round" stroke-linecap="round" opacity="0.55" filter="url(#b3)"/><polyline points="3245.1,430.6 3360.0,428.0" fill="none" stroke="#555" stroke-width="20" stroke-linejoin="round" stroke-linecap="round" opacity="0.55" filter="url(#b3)"/><polyline points="3323.9,356.4 3412.5,345.9 3494.5,349.2" fill="none" stroke="#555" stroke-width="20" stroke-linejoin="round" stroke-linecap="round" opacity="0.55" filter="url(#b3)"/><polyline points="3241.9,665.8 3346.9,664.2" fill="none" stroke="#555" stroke-width="20" stroke-linejoin="round" stroke-linecap="round" opacity="0.55" filter="url(#b3)"/><polyline points="3304.2,611.7 3337.0,624.8" fill="none" stroke="#555" stroke-width="20" stroke-linejoin="round" stroke-linecap="round" opacity="0.55" filter="url(#b3)"/><polyline points="3463.3,578.9 3474.8,618.2 3478.1,631.4" fill="none" stroke="#555" stroke-width="20" stroke-linejoin="round" stroke-linecap="round" opacity="0.55" filter="url(#b3)"/><polyline points="3465.0,633.0 3501.0,636.3" fill="none" stroke="#555" stroke-width="20" stroke-linejoin="round" stroke-linecap="round" opacity="0.55" filter="url(#b3)"/><polyline points="3494.5,637.9 3504.3,710.1" fill="none" stroke="#555" stroke-width="20" stroke-linejoin="round" stroke-linecap="round" opacity="0.55" filter="url(#b3)"/><polyline points="3386.2,621.5 3399.3,719.9" fill="none" stroke="#555" stroke-width="20" stroke-linejoin="round" stroke-linecap="round" opacity="0.55" filter="url(#b3)"/><polyline points="3227.1,700.0 3227.1,798.4 3278.0,801.7 3271.4,831.2 3227.1,834.5 3230.4,944.4 3236.9,949.3" fill="none" stroke="#555" stroke-width="20" stroke-linejoin="round" stroke-linecap="round" opacity="0.55" filter="url(#b3)"/><polyline points="3236.9,951.0 3389.5,949.3" fill="none" stroke="#555" stroke-width="20" stroke-linejoin="round" stroke-linecap="round" opacity="0.55" filter="url(#b3)"/><polyline points="3389.5,913.3 3391.1,1008.4" fill="none" stroke="#555" stroke-width="20" stroke-linejoin="round" stroke-linecap="round" opacity="0.55" filter="url(#b3)"/><polyline points="3392.8,916.5 3445.3,910.0" fill="none" stroke="#555" stroke-width="20" stroke-linejoin="round" stroke-linecap="round" opacity="0.55" filter="url(#b3)"/><polyline points="3445.3,913.3 3478.1,903.4 3553.5,860.8" fill="none" stroke="#555" stroke-width="20" stroke-linejoin="round" stroke-linecap="round" opacity="0.55" filter="url(#b3)"/><polyline points="3510.9,1028.1 3533.9,1150.1" fill="none" stroke="#555" stroke-width="20" stroke-linejoin="round" stroke-linecap="round" opacity="0.55" filter="url(#b3)"/><polyline points="3226.1,962.5 3228.7,1116.7" fill="none" stroke="#555" stroke-width="20" stroke-linejoin="round" stroke-linecap="round" opacity="0.55" filter="url(#b3)"/><polyline points="3530.6,1080.0 3527.3,1221.1 3514.2,1235.8 3343.6,1239.1 3340.3,1221.1 3212.3,1219.4" fill="none" stroke="#555" stroke-width="20" stroke-linejoin="round" stroke-linecap="round" opacity="0.55" filter="url(#b3)"/><polyline points="3212.3,1217.8 3212.3,1188.3" fill="none" stroke="#555" stroke-width="20" stroke-linejoin="round" stroke-linecap="round" opacity="0.55" filter="url(#b3)"/><polyline points="3038.6,1153 3045,1179 3067,1186" fill="none" stroke="#555" stroke-width="20" stroke-linejoin="round" stroke-linecap="round" opacity="0.55" filter="url(#b3)"/><polyline points="3140,1186 3145,1208" fill="none" stroke="#555" stroke-width="20" stroke-linejoin="round" stroke-linecap="round" opacity="0.55" filter="url(#b3)"/><polyline points="3232.0,441.1 3236.9,562.5 3240.2,660.9" fill="none" stroke="#262626" stroke-width="8" stroke-linejoin="round" stroke-linecap="round" filter="url(#b1)"/><polyline points="3245.1,430.6 3360.0,428.0" fill="none" stroke="#262626" stroke-width="8" stroke-linejoin="round" stroke-linecap="round" filter="url(#b1)"/><polyline points="3323.9,356.4 3412.5,345.9 3494.5,349.2" fill="none" stroke="#262626" stroke-width="8" stroke-linejoin="round" stroke-linecap="round" filter="url(#b1)"/><polyline points="3241.9,665.8 3346.9,664.2" fill="none" stroke="#262626" stroke-width="8" stroke-linejoin="round" stroke-linecap="round" filter="url(#b1)"/><polyline points="3304.2,611.7 3337.0,624.8" fill="none" stroke="#262626" stroke-width="8" stroke-linejoin="round" stroke-linecap="round" filter="url(#b1)"/><polyline points="3463.3,578.9 3474.8,618.2 3478.1,631.4" fill="none" stroke="#262626" stroke-width="8" stroke-linejoin="round" stroke-linecap="round" filter="url(#b1)"/><polyline points="3465.0,633.0 3501.0,636.3" fill="none" stroke="#262626" stroke-width="8" stroke-linejoin="round" stroke-linecap="round" filter="url(#b1)"/><polyline points="3494.5,637.9 3504.3,710.1" fill="none" stroke="#262626" stroke-width="8" stroke-linejoin="round" stroke-linecap="round" filter="url(#b1)"/><polyline points="3386.2,621.5 3399.3,719.9" fill="none" stroke="#262626" stroke-width="8" stroke-linejoin="round" stroke-linecap="round" filter="url(#b1)"/><polyline points="3227.1,700.0 3227.1,798.4 3278.0,801.7 3271.4,831.2 3227.1,834.5 3230.4,944.4 3236.9,949.3" fill="none" stroke="#262626" stroke-width="8" stroke-linejoin="round" stroke-linecap="round" filter="url(#b1)"/><polyline points="3236.9,951.0 3389.5,949.3" fill="none" stroke="#262626" stroke-width="8" stroke-linejoin="round" stroke-linecap="round" filter="url(#b1)"/><polyline points="3389.5,913.3 3391.1,1008.4" fill="none" stroke="#262626" stroke-width="8" stroke-linejoin="round" stroke-linecap="round" filter="url(#b1)"/><polyline points="3392.8,916.5 3445.3,910.0" fill="none" stroke="#262626" stroke-width="8" stroke-linejoin="round" stroke-linecap="round" filter="url(#b1)"/><polyline points="3445.3,913.3 3478.1,903.4 3553.5,860.8" fill="none" stroke="#262626" stroke-width="8" stroke-linejoin="round" stroke-linecap="round" filter="url(#b1)"/><polyline points="3510.9,1028.1 3533.9,1150.1" fill="none" stroke="#262626" stroke-width="8" stroke-linejoin="round" stroke-linecap="round" filter="url(#b1)"/><polyline points="3226.1,962.5 3228.7,1116.7" fill="none" stroke="#262626" stroke-width="8" stroke-linejoin="round" stroke-linecap="round" filter="url(#b1)"/><polyline points="3530.6,1080.0 3527.3,1221.1 3514.2,1235.8 3343.6,1239.1 3340.3,1221.1 3212.3,1219.4" fill="none" stroke="#262626" stroke-width="8" stroke-linejoin="round" stroke-linecap="round" filter="url(#b1)"/><polyline points="3212.3,1217.8 3212.3,1188.3" fill="none" stroke="#262626" stroke-width="8" stroke-linejoin="round" stroke-linecap="round" filter="url(#b1)"/><polyline points="3038.6,1153 3045,1179 3067,1186" fill="none" stroke="#262626" stroke-width="8" stroke-linejoin="round" stroke-linecap="round" filter="url(#b1)"/><polyline points="3140,1186 3145,1208" fill="none" stroke="#262626" stroke-width="8" stroke-linejoin="round" stroke-linecap="round" filter="url(#b1)"/><g opacity="0.85"><rect x="3227.9" y="479.1" width="3" height="3" fill="#2a2a2a"/><rect x="3225.9" y="483.7" width="4" height="4" fill="#2a2a2a"/><rect x="3231.4" y="443.1" width="5" height="5" fill="#2a2a2a"/><rect x="3230.0" y="446.8" width="3" height="3" fill="#8a8a8a"/><rect x="3238.6" y="553.4" width="5" height="5" fill="#2a2a2a"/><rect x="3235.6" y="445.4" width="3" height="3" fill="#3c3c3c"/><rect x="3229.7" y="507.3" width="3" height="3" fill="#8a8a8a"/><rect x="3228.9" y="508.6" width="4" height="4" fill="#8a8a8a"/><rect x="3233.9" y="452.0" width="3" height="3" fill="#2a2a2a"/><rect x="3234.2" y="507.6" width="4" height="4" fill="#8a8a8a"/><rect x="3240.4" y="498.5" width="5" height="5" fill="#6a6a6a"/><rect x="3233.5" y="482.9" width="4" height="4" fill="#3c3c3c"/><rect x="3232.7" y="523.5" width="5" height="5" fill="#8a8a8a"/><rect x="3227.3" y="545.1" width="5" height="5" fill="#a0a0a0"/><rect x="3228.9" y="474.2" width="4" height="4" fill="#6a6a6a"/><rect x="3233.5" y="530.5" width="5" height="5" fill="#3c3c3c"/><rect x="3230.1" y="490.4" width="4" height="4" fill="#8a8a8a"/><rect x="3231.6" y="479.9" width="5" height="5" fill="#555"/><rect x="3241.5" y="508.6" width="5" height="5" fill="#555"/><rect x="3231.3" y="524.3" width="3" height="3" fill="#2a2a2a"/><rect x="3235.5" y="527.3" width="5" height="5" fill="#a0a0a0"/><rect x="3225.3" y="473.9" width="4" height="4" fill="#6a6a6a"/><rect x="3232.6" y="441.2" width="5" height="5" fill="#2a2a2a"/><rect x="3229.6" y="446.3" width="4" height="4" fill="#555"/><rect x="3243.0" y="528.9" width="3" height="3" fill="#6a6a6a"/><rect x="3224.1" y="459.6" width="4" height="4" fill="#6a6a6a"/><rect x="3229.6" y="546.0" width="5" height="5" fill="#555"/><rect x="3243.4" y="558.0" width="5" height="5" fill="#a0a0a0"/><rect x="3232.9" y="555.4" width="4" height="4" fill="#3c3c3c"/><rect x="3227.5" y="440.7" width="4" height="4" fill="#8a8a8a"/><rect x="3226.1" y="471.2" width="4" height="4" fill="#555"/><rect x="3235.0" y="555.3" width="3" height="3" fill="#a0a0a0"/><rect x="3223.3" y="494.4" width="5" height="5" fill="#a0a0a0"/><rect x="3241.4" y="487.6" width="3" height="3" fill="#6a6a6a"/><rect x="3238.6" y="607.3" width="5" height="5" fill="#3c3c3c"/><rect x="3234.0" y="577.0" width="3" height="3" fill="#555"/><rect x="3241.4" y="570.9" width="3" height="3" fill="#555"/><rect x="3237.2" y="566.8" width="5" height="5" fill="#3c3c3c"/><rect x="3235.0" y="574.6" width="5" height="5" fill="#555"/><rect x="3230.2" y="572.2" width="5" height="5" fill="#6a6a6a"/><rect x="3237.5" y="607.7" width="4" height="4" fill="#a0a0a0"/><rect x="3234.8" y="633.4" width="4" height="4" fill="#6a6a6a"/><rect x="3233.2" y="611.4" width="4" height="4" fill="#555"/><rect x="3225.3" y="628.8" width="4" height="4" fill="#2a2a2a"/><rect x="3233.1" y="657.0" width="4" height="4" fill="#555"/><rect x="3243.7" y="649.7" width="4" height="4" fill="#555"/><rect x="3235.8" y="612.9" width="4" height="4" fill="#3c3c3c"/><rect x="3242.0" y="639.7" width="4" height="4" fill="#6a6a6a"/><rect x="3243.6" y="579.9" width="4" height="4" fill="#2a2a2a"/><rect x="3236.1" y="607.0" width="4" height="4" fill="#3c3c3c"/><rect x="3223.2" y="605.5" width="3" height="3" fill="#555"/><rect x="3240.9" y="581.5" width="5" height="5" fill="#3c3c3c"/><rect x="3234.1" y="580.4" width="3" height="3" fill="#8a8a8a"/><rect x="3229.8" y="607.9" width="4" height="4" fill="#a0a0a0"/><rect x="3231.2" y="639.4" width="4" height="4" fill="#6a6a6a"/><rect x="3232.2" y="607.2" width="5" height="5" fill="#3c3c3c"/><rect x="3241.5" y="637.5" width="5" height="5" fill="#a0a0a0"/><rect x="3229.1" y="606.8" width="3" height="3" fill="#a0a0a0"/><rect x="3235.5" y="631.4" width="5" height="5" fill="#3c3c3c"/><rect x="3234.8" y="639.4" width="5" height="5" fill="#3c3c3c"/><rect x="3241.3" y="625.6" width="3" height="3" fill="#3c3c3c"/><rect x="3230.4" y="562.6" width="3" height="3" fill="#a0a0a0"/><rect x="3303.7" y="432.1" width="4" height="4" fill="#3c3c3c"/><rect x="3246.3" y="426.4" width="4" height="4" fill="#3c3c3c"/><rect x="3300.2" y="427.2" width="5" height="5" fill="#8a8a8a"/><rect x="3338.8" y="422.0" width="4" height="4" fill="#2a2a2a"/><rect x="3345.6" y="421.0" width="5" height="5" fill="#8a8a8a"/><rect x="3338.0" y="418.6" width="4" height="4" fill="#8a8a8a"/><rect x="3304.2" y="426.3" width="4" height="4" fill="#6a6a6a"/><rect x="3313.0" y="426.9" width="4" height="4" fill="#3c3c3c"/><rect x="3259.3" y="426.4" width="4" height="4" fill="#2a2a2a"/><rect x="3321.0" y="424.6" width="5" height="5" fill="#8a8a8a"/><rect x="3333.3" y="431.6" width="4" height="4" fill="#3c3c3c"/><rect x="3274.5" y="431.3" width="5" height="5" fill="#2a2a2a"/><rect x="3307.7" y="427.8" width="4" height="4" fill="#6a6a6a"/><rect x="3313.2" y="416.0" width="4" height="4" fill="#8a8a8a"/><rect x="3322.6" y="420.9" width="4" height="4" fill="#6a6a6a"/><rect x="3323.5" y="428.6" width="4" height="4" fill="#555"/><rect x="3339.7" y="428.1" width="4" height="4" fill="#6a6a6a"/><rect x="3251.0" y="429.8" width="5" height="5" fill="#3c3c3c"/><rect x="3251.4" y="424.2" width="4" height="4" fill="#3c3c3c"/><rect x="3258.9" y="420.1" width="5" height="5" fill="#3c3c3c"/><rect x="3268.4" y="432.8" width="4" height="4" fill="#6a6a6a"/><rect x="3356.8" y="424.5" width="4" height="4" fill="#3c3c3c"/><rect x="3324.4" y="431.8" width="4" height="4" fill="#6a6a6a"/><rect x="3284.1" y="427.5" width="4" height="4" fill="#2a2a2a"/><rect x="3244.7" y="423.0" width="5" height="5" fill="#2a2a2a"/><rect x="3281.1" y="425.9" width="4" height="4" fill="#8a8a8a"/><rect x="3302.8" y="441.1" width="3" height="3" fill="#3c3c3c"/><rect x="3253.4" y="434.6" width="3" height="3" fill="#555"/><rect x="3347.3" y="429.7" width="4" height="4" fill="#6a6a6a"/><rect x="3289.4" y="434.7" width="5" height="5" fill="#8a8a8a"/><rect x="3323.6" y="428.2" width="4" height="4" fill="#a0a0a0"/><rect x="3292.0" y="428.4" width="4" height="4" fill="#2a2a2a"/><rect x="3404.3" y="338.6" width="4" height="4" fill="#2a2a2a"/><rect x="3326.5" y="346.5" width="5" height="5" fill="#2a2a2a"/><rect x="3323.5" y="359.4" width="4" height="4" fill="#555"/><rect x="3325.7" y="353.8" width="4" height="4" fill="#a0a0a0"/><rect x="3405.5" y="348.3" width="4" height="4" fill="#3c3c3c"/><rect x="3404.4" y="343.9" width="4" height="4" fill="#a0a0a0"/><rect x="3369.1" y="350.3" width="4" height="4" fill="#a0a0a0"/><rect x="3346.5" y="356.7" width="4" height="4" fill="#2a2a2a"/><rect x="3325.4" y="359.4" width="5" height="5" fill="#3c3c3c"/><rect x="3344.2" y="353.0" width="3" height="3" fill="#6a6a6a"/><rect x="3379.2" y="342.7" width="5" height="5" fill="#8a8a8a"/><rect x="3407.2" y="338.3" width="4" height="4" fill="#555"/><rect x="3408.3" y="338.9" width="4" height="4" fill="#a0a0a0"/><rect x="3359.2" y="358.5" width="3" height="3" fill="#555"/><rect x="3396.4" y="352.0" width="5" height="5" fill="#555"/><rect x="3335.9" y="352.8" width="5" height="5" fill="#2a2a2a"/><rect x="3398.8" y="343.3" width="4" height="4" fill="#3c3c3c"/><rect x="3325.5" y="350.4" width="4" height="4" fill="#3c3c3c"/><rect x="3346.3" y="356.3" width="4" height="4" fill="#555"/><rect x="3343.6" y="351.9" width="4" height="4" fill="#555"/><rect x="3354.1" y="355.5" width="4" height="4" fill="#6a6a6a"/><rect x="3366.4" y="349.2" width="4" height="4" fill="#3c3c3c"/><rect x="3367.1" y="353.0" width="4" height="4" fill="#2a2a2a"/><rect x="3356.8" y="349.8" width="5" height="5" fill="#2a2a2a"/><rect x="3323.7" y="353.0" width="4" height="4" fill="#8a8a8a"/><rect x="3463.8" y="349.0" width="5" height="5" fill="#a0a0a0"/><rect x="3473.2" y="345.4" width="4" height="4" fill="#555"/><rect x="3413.8" y="337.8" width="5" height="5" fill="#a0a0a0"/><rect x="3471.1" y="347.9" width="3" height="3" fill="#8a8a8a"/><rect x="3478.4" y="344.1" width="4" height="4" fill="#8a8a8a"/><rect x="3416.7" y="350.5" width="5" height="5" fill="#2a2a2a"/><rect x="3479.5" y="349.0" width="3" height="3" fill="#8a8a8a"/><rect x="3462.2" y="340.7" width="4" height="4" fill="#6a6a6a"/><rect x="3411.5" y="339.0" width="3" height="3" fill="#2a2a2a"/><rect x="3464.8" y="354.0" width="3" height="3" fill="#555"/><rect x="3479.8" y="350.0" width="4" height="4" fill="#3c3c3c"/><rect x="3430.1" y="341.9" width="3" height="3" fill="#6a6a6a"/><rect x="3450.0" y="341.0" width="4" height="4" fill="#a0a0a0"/><rect x="3473.6" y="341.1" width="4" height="4" fill="#2a2a2a"/><rect x="3437.9" y="340.2" width="4" height="4" fill="#a0a0a0"/><rect x="3461.3" y="349.8" width="4" height="4" fill="#6a6a6a"/><rect x="3490.1" y="351.4" width="4" height="4" fill="#2a2a2a"/><rect x="3465.5" y="344.1" width="5" height="5" fill="#6a6a6a"/><rect x="3448.5" y="351.3" width="4" height="4" fill="#2a2a2a"/><rect x="3435.4" y="349.3" width="5" height="5" fill="#555"/><rect x="3416.2" y="346.6" width="5" height="5" fill="#8a8a8a"/><rect x="3492.8" y="339.2" width="3" height="3" fill="#3c3c3c"/><rect x="3457.9" y="353.1" width="4" height="4" fill="#3c3c3c"/><rect x="3340.0" y="668.5" width="4" height="4" fill="#8a8a8a"/><rect x="3333.1" y="669.2" width="4" height="4" fill="#a0a0a0"/><rect x="3264.3" y="668.0" width="4" height="4" fill="#2a2a2a"/><rect x="3239.7" y="659.8" width="5" height="5" fill="#6a6a6a"/><rect x="3282.5" y="662.4" width="4" height="4" fill="#6a6a6a"/><rect x="3253.0" y="659.0" width="3" height="3" fill="#555"/><rect x="3274.4" y="661.1" width="3" height="3" fill="#3c3c3c"/><rect x="3334.6" y="666.6" width="4" height="4" fill="#555"/><rect x="3279.3" y="649.4" width="3" height="3" fill="#8a8a8a"/><rect x="3277.9" y="674.6" width="4" height="4" fill="#6a6a6a"/><rect x="3329.6" y="662.1" width="4" height="4" fill="#a0a0a0"/><rect x="3306.6" y="664.4" width="4" height="4" fill="#3c3c3c"/><rect x="3341.3" y="657.7" width="5" height="5" fill="#555"/><rect x="3332.3" y="663.6" width="5" height="5" fill="#a0a0a0"/><rect x="3336.4" y="668.7" width="3" height="3" fill="#a0a0a0"/><rect x="3244.6" y="660.9" width="5" height="5" fill="#a0a0a0"/><rect x="3286.7" y="662.7" width="5" height="5" fill="#555"/><rect x="3244.9" y="656.5" width="4" height="4" fill="#8a8a8a"/><rect x="3257.8" y="660.0" width="4" height="4" fill="#555"/><rect x="3282.6" y="665.2" width="4" height="4" fill="#3c3c3c"/><rect x="3290.6" y="661.8" width="4" height="4" fill="#a0a0a0"/><rect x="3247.3" y="661.0" width="5" height="5" fill="#8a8a8a"/><rect x="3297.1" y="658.1" width="5" height="5" fill="#6a6a6a"/><rect x="3254.6" y="664.9" width="4" height="4" fill="#3c3c3c"/><rect x="3249.4" y="662.5" width="4" height="4" fill="#3c3c3c"/><rect x="3267.1" y="665.2" width="4" height="4" fill="#8a8a8a"/><rect x="3333.1" y="662.4" width="4" height="4" fill="#6a6a6a"/><rect x="3279.9" y="658.5" width="3" height="3" fill="#555"/><rect x="3292.1" y="658.8" width="4" height="4" fill="#a0a0a0"/><rect x="3249.1" y="661.0" width="5" height="5" fill="#3c3c3c"/><rect x="3319.6" y="604.1" width="4" height="4" fill="#2a2a2a"/><rect x="3301.2" y="613.5" width="5" height="5" fill="#a0a0a0"/><rect x="3334.2" y="620.1" width="5" height="5" fill="#8a8a8a"/><rect x="3334.5" y="623.1" width="3" height="3" fill="#3c3c3c"/><rect x="3306.2" y="619.3" width="5" height="5" fill="#2a2a2a"/><rect x="3301.4" y="621.4" width="3" height="3" fill="#2a2a2a"/><rect x="3327.4" y="621.1" width="4" height="4" fill="#a0a0a0"/><rect x="3329.6" y="632.7" width="4" height="4" fill="#a0a0a0"/><rect x="3322.9" y="609.8" width="3" height="3" fill="#2a2a2a"/><rect x="3310.8" y="616.7" width="4" height="4" fill="#8a8a8a"/><rect x="3464.7" y="592.5" width="4" height="4" fill="#2a2a2a"/><rect x="3466.3" y="617.9" width="4" height="4" fill="#555"/><rect x="3464.7" y="603.4" width="4" height="4" fill="#3c3c3c"/><rect x="3465.3" y="577.0" width="4" height="4" fill="#6a6a6a"/><rect x="3458.0" y="579.6" width="5" height="5" fill="#a0a0a0"/><rect x="3452.4" y="582.3" width="5" height="5" fill="#3c3c3c"/><rect x="3471.3" y="612.8" width="5" height="5" fill="#555"/><rect x="3464.2" y="591.5" width="4" height="4" fill="#6a6a6a"/><rect x="3463.8" y="576.5" width="4" height="4" fill="#2a2a2a"/><rect x="3458.1" y="599.0" width="4" height="4" fill="#3c3c3c"/><rect x="3468.3" y="607.5" width="4" height="4" fill="#555"/><rect x="3467.6" y="618.4" width="5" height="5" fill="#8a8a8a"/><rect x="3470.9" y="625.9" width="3" height="3" fill="#a0a0a0"/><rect x="3478.8" y="627.4" width="5" height="5" fill="#3c3c3c"/><rect x="3464.8" y="638.3" width="3" height="3" fill="#6a6a6a"/><rect x="3488.0" y="633.8" width="5" height="5" fill="#3c3c3c"/><rect x="3479.8" y="632.0" width="3" height="3" fill="#2a2a2a"/><rect x="3496.9" y="629.9" width="4" height="4" fill="#555"/><rect x="3469.0" y="639.2" width="4" height="4" fill="#2a2a2a"/><rect x="3487.2" y="630.0" width="4" height="4" fill="#6a6a6a"/><rect x="3498.7" y="632.0" width="4" height="4" fill="#2a2a2a"/><rect x="3466.3" y="632.6" width="3" height="3" fill="#6a6a6a"/><rect x="3482.7" y="632.6" width="5" height="5" fill="#555"/><rect x="3466.1" y="625.9" width="5" height="5" fill="#a0a0a0"/><rect x="3499.6" y="649.3" width="4" height="4" fill="#555"/><rect x="3501.6" y="689.4" width="3" height="3" fill="#6a6a6a"/><rect x="3499.1" y="682.0" width="3" height="3" fill="#6a6a6a"/><rect x="3489.7" y="664.5" width="3" height="3" fill="#6a6a6a"/><rect x="3497.4" y="694.3" width="4" height="4" fill="#2a2a2a"/><rect x="3495.3" y="662.8" width="3" height="3" fill="#555"/><rect x="3496.0" y="654.7" width="4" height="4" fill="#555"/><rect x="3497.3" y="636.1" width="3" height="3" fill="#8a8a8a"/><rect x="3491.7" y="637.2" width="5" height="5" fill="#6a6a6a"/><rect x="3494.1" y="693.2" width="5" height="5" fill="#6a6a6a"/><rect x="3494.5" y="645.4" width="4" height="4" fill="#a0a0a0"/><rect x="3500.5" y="695.3" width="4" height="4" fill="#3c3c3c"/><rect x="3498.2" y="659.8" width="3" height="3" fill="#8a8a8a"/><rect x="3493.3" y="673.4" width="4" height="4" fill="#6a6a6a"/><rect x="3493.7" y="653.9" width="4" height="4" fill="#8a8a8a"/><rect x="3494.1" y="648.1" width="3" height="3" fill="#6a6a6a"/><rect x="3501.9" y="706.7" width="5" height="5" fill="#2a2a2a"/><rect x="3494.8" y="671.7" width="5" height="5" fill="#a0a0a0"/><rect x="3490.5" y="648.9" width="4" height="4" fill="#a0a0a0"/><rect x="3496.2" y="691.0" width="3" height="3" fill="#a0a0a0"/><rect x="3395.5" y="696.1" width="4" height="4" fill="#555"/><rect x="3383.7" y="645.0" width="4" height="4" fill="#555"/><rect x="3388.5" y="662.9" width="4" height="4" fill="#555"/><rect x="3385.1" y="652.1" width="4" height="4" fill="#6a6a6a"/><rect x="3400.3" y="716.2" width="5" height="5" fill="#2a2a2a"/><rect x="3397.8" y="717.5" width="3" height="3" fill="#2a2a2a"/><rect x="3386.9" y="667.2" width="3" height="3" fill="#555"/><rect x="3404.8" y="705.1" width="3" height="3" fill="#3c3c3c"/><rect x="3392.9" y="624.0" width="3" height="3" fill="#3c3c3c"/><rect x="3394.1" y="654.9" width="5" height="5" fill="#3c3c3c"/><rect x="3391.5" y="679.5" width="3" height="3" fill="#2a2a2a"/><rect x="3399.8" y="681.3" width="4" height="4" fill="#a0a0a0"/><rect x="3388.9" y="640.7" width="4" height="4" fill="#3c3c3c"/><rect x="3382.7" y="623.5" width="4" height="4" fill="#a0a0a0"/><rect x="3392.7" y="700.0" width="4" height="4" fill="#555"/><rect x="3397.0" y="680.0" width="4" height="4" fill="#2a2a2a"/><rect x="3390.8" y="622.3" width="3" height="3" fill="#6a6a6a"/><rect x="3394.5" y="697.8" width="4" height="4" fill="#a0a0a0"/><rect x="3390.1" y="682.7" width="4" height="4" fill="#a0a0a0"/><rect x="3388.0" y="660.0" width="4" height="4" fill="#555"/><rect x="3381.4" y="661.2" width="5" height="5" fill="#555"/><rect x="3387.1" y="660.8" width="4" height="4" fill="#555"/><rect x="3399.1" y="656.6" width="4" height="4" fill="#6a6a6a"/><rect x="3382.6" y="661.6" width="5" height="5" fill="#2a2a2a"/><rect x="3397.9" y="676.1" width="3" height="3" fill="#3c3c3c"/><rect x="3378.0" y="624.9" width="5" height="5" fill="#3c3c3c"/><rect x="3388.8" y="627.8" width="4" height="4" fill="#8a8a8a"/><rect x="3389.4" y="633.4" width="4" height="4" fill="#555"/><rect x="3223.0" y="749.3" width="4" height="4" fill="#6a6a6a"/><rect x="3225.7" y="727.2" width="5" height="5" fill="#2a2a2a"/><rect x="3230.6" y="728.9" width="4" height="4" fill="#2a2a2a"/><rect x="3229.1" y="760.5" width="5" height="5" fill="#3c3c3c"/><rect x="3223.2" y="758.5" width="4" height="4" fill="#8a8a8a"/><rect x="3219.8" y="702.1" width="4" height="4" fill="#8a8a8a"/><rect x="3222.4" y="735.7" width="4" height="4" fill="#a0a0a0"/><rect x="3223.0" y="702.5" width="3" height="3" fill="#8a8a8a"/><rect x="3227.3" y="763.7" width="4" height="4" fill="#6a6a6a"/><rect x="3220.7" y="761.9" width="4" height="4" fill="#555"/><rect x="3228.0" y="739.9" width="4" height="4" fill="#6a6a6a"/><rect x="3229.2" y="699.8" width="5" height="5" fill="#8a8a8a"/><rect x="3231.7" y="743.8" width="4" height="4" fill="#6a6a6a"/><rect x="3223.3" y="778.3" width="3" height="3" fill="#6a6a6a"/><rect x="3228.6" y="705.1" width="3" height="3" fill="#6a6a6a"/><rect x="3221.9" y="702.5" width="3" height="3" fill="#3c3c3c"/><rect x="3228.7" y="789.2" width="3" height="3" fill="#2a2a2a"/><rect x="3217.7" y="772.0" width="4" height="4" fill="#6a6a6a"/><rect x="3219.3" y="701.0" width="3" height="3" fill="#a0a0a0"/><rect x="3222.3" y="717.1" width="4" height="4" fill="#6a6a6a"/><rect x="3222.5" y="792.1" width="4" height="4" fill="#a0a0a0"/><rect x="3226.6" y="704.4" width="4" height="4" fill="#555"/><rect x="3221.9" y="713.6" width="4" height="4" fill="#6a6a6a"/><rect x="3227.5" y="723.0" width="4" height="4" fill="#6a6a6a"/><rect x="3228.3" y="756.7" width="3" height="3" fill="#555"/><rect x="3227.5" y="717.6" width="4" height="4" fill="#6a6a6a"/><rect x="3225.9" y="760.6" width="4" height="4" fill="#6a6a6a"/><rect x="3221.2" y="776.4" width="3" height="3" fill="#555"/><rect x="3264.1" y="808.8" width="3" height="3" fill="#6a6a6a"/><rect x="3237.2" y="799.7" width="5" height="5" fill="#8a8a8a"/><rect x="3262.9" y="795.5" width="4" height="4" fill="#555"/><rect x="3242.7" y="800.6" width="5" height="5" fill="#2a2a2a"/><rect x="3237.4" y="787.8" width="4" height="4" fill="#555"/><rect x="3241.4" y="789.1" width="4" height="4" fill="#8a8a8a"/><rect x="3261.9" y="798.3" width="5" height="5" fill="#555"/><rect x="3247.1" y="794.7" width="3" height="3" fill="#555"/><rect x="3232.3" y="798.4" width="3" height="3" fill="#2a2a2a"/><rect x="3224.8" y="803.6" width="4" height="4" fill="#555"/><rect x="3230.7" y="794.5" width="4" height="4" fill="#8a8a8a"/><rect x="3254.9" y="801.1" width="4" height="4" fill="#3c3c3c"/><rect x="3257.0" y="795.8" width="4" height="4" fill="#3c3c3c"/><rect x="3248.0" y="798.3" width="4" height="4" fill="#2a2a2a"/><rect x="3269.8" y="825.7" width="3" height="3" fill="#555"/><rect x="3280.5" y="802.4" width="4" height="4" fill="#8a8a8a"/><rect x="3277.4" y="818.0" width="5" height="5" fill="#8a8a8a"/><rect x="3278.0" y="808.2" width="3" height="3" fill="#2a2a2a"/><rect x="3273.0" y="801.3" width="3" height="3" fill="#3c3c3c"/><rect x="3270.0" y="827.0" width="3" height="3" fill="#2a2a2a"/><rect x="3273.7" y="818.2" width="4" height="4" fill="#6a6a6a"/><rect x="3274.8" y="815.1" width="5" height="5" fill="#a0a0a0"/><rect x="3233.7" y="830.4" width="3" height="3" fill="#555"/><rect x="3224.6" y="828.2" width="5" height="5" fill="#a0a0a0"/><rect x="3236.5" y="821.4" width="5" height="5" fill="#a0a0a0"/><rect x="3265.3" y="828.6" width="5" height="5" fill="#a0a0a0"/><rect x="3261.8" y="826.4" width="3" height="3" fill="#a0a0a0"/><rect x="3263.9" y="829.7" width="4" height="4" fill="#a0a0a0"/><rect x="3237.9" y="832.2" width="4" height="4" fill="#6a6a6a"/><rect x="3256.3" y="824.4" width="3" height="3" fill="#3c3c3c"/><rect x="3230.1" y="828.2" width="4" height="4" fill="#3c3c3c"/><rect x="3227.5" y="831.9" width="4" height="4" fill="#a0a0a0"/><rect x="3260.8" y="834.5" width="5" height="5" fill="#6a6a6a"/><rect x="3248.7" y="826.9" width="3" height="3" fill="#8a8a8a"/><rect x="3235.3" y="926.5" width="4" height="4" fill="#8a8a8a"/><rect x="3225.1" y="919.8" width="3" height="3" fill="#6a6a6a"/><rect x="3226.9" y="895.1" width="3" height="3" fill="#2a2a2a"/><rect x="3226.0" y="900.9" width="4" height="4" fill="#3c3c3c"/><rect x="3229.2" y="940.4" width="3" height="3" fill="#3c3c3c"/><rect x="3229.1" y="909.6" width="3" height="3" fill="#a0a0a0"/><rect x="3229.8" y="840.1" width="3" height="3" fill="#8a8a8a"/><rect x="3230.1" y="928.6" width="5" height="5" fill="#a0a0a0"/><rect x="3225.3" y="844.8" width="3" height="3" fill="#2a2a2a"/><rect x="3225.5" y="923.2" width="4" height="4" fill="#a0a0a0"/><rect x="3220.7" y="885.1" width="4" height="4" fill="#a0a0a0"/><rect x="3219.0" y="864.6" width="5" height="5" fill="#555"/><rect x="3232.8" y="861.0" width="4" height="4" fill="#2a2a2a"/><rect x="3218.3" y="932.3" width="5" height="5" fill="#8a8a8a"/><rect x="3229.3" y="926.5" width="3" height="3" fill="#6a6a6a"/><rect x="3227.4" y="880.4" width="4" height="4" fill="#2a2a2a"/><rect x="3221.0" y="884.7" width="3" height="3" fill="#a0a0a0"/><rect x="3225.1" y="895.7" width="4" height="4" fill="#555"/><rect x="3231.1" y="880.8" width="3" height="3" fill="#2a2a2a"/><rect x="3226.4" y="870.2" width="5" height="5" fill="#2a2a2a"/><rect x="3221.4" y="909.1" width="4" height="4" fill="#8a8a8a"/><rect x="3239.9" y="937.3" width="4" height="4" fill="#8a8a8a"/><rect x="3222.0" y="896.2" width="4" height="4" fill="#a0a0a0"/><rect x="3219.5" y="888.0" width="3" height="3" fill="#2a2a2a"/><rect x="3220.3" y="886.6" width="4" height="4" fill="#2a2a2a"/><rect x="3226.1" y="871.1" width="5" height="5" fill="#6a6a6a"/><rect x="3228.7" y="931.0" width="3" height="3" fill="#a0a0a0"/><rect x="3231.6" y="873.2" width="4" height="4" fill="#555"/><rect x="3229.5" y="879.5" width="4" height="4" fill="#a0a0a0"/><rect x="3229.6" y="936.7" width="3" height="3" fill="#3c3c3c"/><rect x="3227.6" y="870.8" width="4" height="4" fill="#6a6a6a"/><rect x="3228.0" y="945.3" width="4" height="4" fill="#6a6a6a"/><rect x="3229.8" y="948.4" width="4" height="4" fill="#a0a0a0"/><rect x="3312.4" y="952.1" width="4" height="4" fill="#555"/><rect x="3350.1" y="950.9" width="4" height="4" fill="#a0a0a0"/><rect x="3383.6" y="941.2" width="4" height="4" fill="#a0a0a0"/><rect x="3326.9" y="945.8" width="4" height="4" fill="#3c3c3c"/><rect x="3384.2" y="950.8" width="3" height="3" fill="#a0a0a0"/><rect x="3260.0" y="946.9" width="4" height="4" fill="#3c3c3c"/><rect x="3356.2" y="944.9" width="4" height="4" fill="#a0a0a0"/><rect x="3301.3" y="950.6" width="4" height="4" fill="#2a2a2a"/><rect x="3266.0" y="954.9" width="5" height="5" fill="#6a6a6a"/><rect x="3240.0" y="941.8" width="4" height="4" fill="#a0a0a0"/><rect x="3311.3" y="953.4" width="4" height="4" fill="#a0a0a0"/><rect x="3306.1" y="953.0" width="3" height="3" fill="#6a6a6a"/><rect x="3347.5" y="952.5" width="5" height="5" fill="#6a6a6a"/><rect x="3364.0" y="944.0" width="4" height="4" fill="#a0a0a0"/><rect x="3339.0" y="942.0" width="3" height="3" fill="#a0a0a0"/><rect x="3303.6" y="945.0" width="5" height="5" fill="#2a2a2a"/><rect x="3272.0" y="955.1" width="4" height="4" fill="#6a6a6a"/><rect x="3272.5" y="943.2" width="5" height="5" fill="#8a8a8a"/><rect x="3314.0" y="950.7" width="4" height="4" fill="#a0a0a0"/><rect x="3371.9" y="947.6" width="3" height="3" fill="#6a6a6a"/><rect x="3240.7" y="949.6" width="4" height="4" fill="#8a8a8a"/><rect x="3259.5" y="951.1" width="4" height="4" fill="#8a8a8a"/><rect x="3249.7" y="936.7" width="5" height="5" fill="#8a8a8a"/><rect x="3317.4" y="946.9" width="4" height="4" fill="#a0a0a0"/><rect x="3313.9" y="941.7" width="5" height="5" fill="#6a6a6a"/><rect x="3266.9" y="946.6" width="4" height="4" fill="#2a2a2a"/><rect x="3332.1" y="943.3" width="4" height="4" fill="#555"/><rect x="3293.2" y="950.2" width="4" height="4" fill="#6a6a6a"/><rect x="3323.4" y="948.8" width="4" height="4" fill="#2a2a2a"/><rect x="3280.6" y="937.9" width="5" height="5" fill="#3c3c3c"/><rect x="3305.5" y="955.5" width="4" height="4" fill="#3c3c3c"/><rect x="3376.3" y="955.0" width="5" height="5" fill="#3c3c3c"/><rect x="3332.9" y="951.7" width="4" height="4" fill="#a0a0a0"/><rect x="3358.8" y="951.6" width="5" height="5" fill="#6a6a6a"/><rect x="3387.0" y="953.2" width="4" height="4" fill="#8a8a8a"/><rect x="3353.8" y="939.1" width="4" height="4" fill="#3c3c3c"/><rect x="3342.4" y="949.5" width="4" height="4" fill="#a0a0a0"/><rect x="3384.9" y="944.9" width="4" height="4" fill="#a0a0a0"/><rect x="3289.5" y="943.2" width="4" height="4" fill="#a0a0a0"/><rect x="3283.7" y="941.5" width="4" height="4" fill="#2a2a2a"/><rect x="3257.7" y="948.9" width="5" height="5" fill="#555"/><rect x="3243.7" y="954.0" width="4" height="4" fill="#3c3c3c"/><rect x="3331.9" y="938.8" width="3" height="3" fill="#2a2a2a"/><rect x="3384.6" y="931.8" width="3" height="3" fill="#8a8a8a"/><rect x="3386.6" y="966.3" width="4" height="4" fill="#3c3c3c"/><rect x="3390.4" y="985.1" width="4" height="4" fill="#6a6a6a"/><rect x="3386.6" y="969.8" width="3" height="3" fill="#a0a0a0"/><rect x="3381.6" y="975.0" width="4" height="4" fill="#555"/><rect x="3394.2" y="958.7" width="3" height="3" fill="#3c3c3c"/><rect x="3398.8" y="982.2" width="3" height="3" fill="#8a8a8a"/><rect x="3384.0" y="936.5" width="4" height="4" fill="#3c3c3c"/><rect x="3393.1" y="955.7" width="5" height="5" fill="#3c3c3c"/><rect x="3390.4" y="935.2" width="3" height="3" fill="#3c3c3c"/><rect x="3391.1" y="926.5" width="4" height="4" fill="#6a6a6a"/><rect x="3381.4" y="990.9" width="5" height="5" fill="#555"/><rect x="3386.3" y="951.2" width="4" height="4" fill="#a0a0a0"/><rect x="3389.5" y="972.3" width="3" height="3" fill="#2a2a2a"/><rect x="3393.7" y="969.7" width="3" height="3" fill="#555"/><rect x="3398.9" y="959.7" width="4" height="4" fill="#6a6a6a"/><rect x="3389.4" y="915.0" width="3" height="3" fill="#555"/><rect x="3395.7" y="993.1" width="4" height="4" fill="#555"/><rect x="3396.7" y="956.3" width="4" height="4" fill="#3c3c3c"/><rect x="3389.6" y="952.7" width="4" height="4" fill="#6a6a6a"/><rect x="3386.0" y="963.5" width="5" height="5" fill="#6a6a6a"/><rect x="3391.7" y="943.0" width="4" height="4" fill="#555"/><rect x="3394.1" y="1003.9" width="4" height="4" fill="#555"/><rect x="3395.3" y="941.3" width="4" height="4" fill="#555"/><rect x="3393.7" y="966.5" width="5" height="5" fill="#2a2a2a"/><rect x="3395.7" y="980.4" width="3" height="3" fill="#6a6a6a"/><rect x="3387.4" y="949.7" width="3" height="3" fill="#6a6a6a"/><rect x="3431.8" y="909.8" width="5" height="5" fill="#8a8a8a"/><rect x="3423.0" y="905.6" width="3" height="3" fill="#8a8a8a"/><rect x="3400.8" y="907.1" width="5" height="5" fill="#a0a0a0"/><rect x="3423.5" y="913.3" width="5" height="5" fill="#2a2a2a"/><rect x="3432.8" y="916.5" width="3" height="3" fill="#a0a0a0"/><rect x="3410.6" y="915.9" width="4" height="4" fill="#8a8a8a"/><rect x="3434.6" y="900.6" width="5" height="5" fill="#3c3c3c"/><rect x="3393.9" y="921.1" width="3" height="3" fill="#8a8a8a"/><rect x="3417.5" y="912.6" width="3" height="3" fill="#8a8a8a"/><rect x="3433.7" y="909.4" width="5" height="5" fill="#a0a0a0"/><rect x="3413.1" y="906.0" width="5" height="5" fill="#2a2a2a"/><rect x="3422.4" y="917.4" width="5" height="5" fill="#3c3c3c"/><rect x="3431.7" y="909.7" width="3" height="3" fill="#8a8a8a"/><rect x="3394.4" y="904.1" width="3" height="3" fill="#a0a0a0"/><rect x="3413.9" y="914.1" width="3" height="3" fill="#2a2a2a"/><rect x="3476.3" y="903.6" width="4" height="4" fill="#2a2a2a"/><rect x="3458.0" y="904.0" width="4" height="4" fill="#555"/><rect x="3458.0" y="906.4" width="4" height="4" fill="#555"/><rect x="3464.0" y="893.2" width="4" height="4" fill="#2a2a2a"/><rect x="3464.0" y="904.2" width="3" height="3" fill="#555"/><rect x="3465.8" y="899.6" width="3" height="3" fill="#2a2a2a"/><rect x="3441.7" y="905.5" width="5" height="5" fill="#2a2a2a"/><rect x="3451.3" y="901.1" width="4" height="4" fill="#a0a0a0"/><rect x="3475.7" y="905.2" width="4" height="4" fill="#555"/><rect x="3544.2" y="855.3" width="5" height="5" fill="#a0a0a0"/><rect x="3514.7" y="887.1" width="4" height="4" fill="#2a2a2a"/><rect x="3553.1" y="870.1" width="5" height="5" fill="#3c3c3c"/><rect x="3512.5" y="881.9" width="4" height="4" fill="#555"/><rect x="3495.5" y="884.2" width="4" height="4" fill="#2a2a2a"/><rect x="3541.6" y="864.2" width="4" height="4" fill="#3c3c3c"/><rect x="3519.3" y="875.2" width="5" height="5" fill="#3c3c3c"/><rect x="3501.8" y="879.1" width="5" height="5" fill="#3c3c3c"/><rect x="3500.4" y="894.6" width="4" height="4" fill="#2a2a2a"/><rect x="3493.0" y="885.1" width="4" height="4" fill="#2a2a2a"/><rect x="3540.5" y="868.6" width="4" height="4" fill="#8a8a8a"/><rect x="3498.9" y="893.9" width="5" height="5" fill="#a0a0a0"/><rect x="3498.2" y="879.8" width="5" height="5" fill="#2a2a2a"/><rect x="3537.5" y="869.7" width="4" height="4" fill="#3c3c3c"/><rect x="3525.3" y="881.9" width="5" height="5" fill="#a0a0a0"/><rect x="3511.2" y="882.0" width="5" height="5" fill="#2a2a2a"/><rect x="3512.6" y="885.0" width="4" height="4" fill="#2a2a2a"/><rect x="3534.7" y="869.1" width="4" height="4" fill="#555"/><rect x="3515.3" y="886.8" width="4" height="4" fill="#8a8a8a"/><rect x="3490.9" y="894.3" width="4" height="4" fill="#a0a0a0"/><rect x="3504.9" y="888.5" width="4" height="4" fill="#8a8a8a"/><rect x="3504.6" y="881.3" width="5" height="5" fill="#2a2a2a"/><rect x="3504.2" y="885.2" width="4" height="4" fill="#2a2a2a"/><rect x="3524.6" y="875.5" width="3" height="3" fill="#8a8a8a"/><rect x="3520.1" y="1068.2" width="3" height="3" fill="#8a8a8a"/><rect x="3507.8" y="1037.6" width="5" height="5" fill="#8a8a8a"/><rect x="3512.9" y="1099.5" width="4" height="4" fill="#3c3c3c"/><rect x="3530.6" y="1138.9" width="4" height="4" fill="#6a6a6a"/><rect x="3512.6" y="1057.5" width="4" height="4" fill="#2a2a2a"/><rect x="3513.2" y="1051.3" width="3" height="3" fill="#2a2a2a"/><rect x="3519.4" y="1094.0" width="5" height="5" fill="#a0a0a0"/><rect x="3513.7" y="1086.1" width="5" height="5" fill="#8a8a8a"/><rect x="3539.2" y="1137.5" width="3" height="3" fill="#a0a0a0"/><rect x="3520.8" y="1055.8" width="5" height="5" fill="#a0a0a0"/><rect x="3515.9" y="1047.9" width="4" height="4" fill="#3c3c3c"/><rect x="3527.6" y="1144.6" width="4" height="4" fill="#2a2a2a"/><rect x="3531.2" y="1141.4" width="3" height="3" fill="#2a2a2a"/><rect x="3519.4" y="1129.3" width="5" height="5" fill="#a0a0a0"/><rect x="3507.7" y="1033.4" width="4" height="4" fill="#3c3c3c"/><rect x="3518.9" y="1119.0" width="5" height="5" fill="#555"/><rect x="3528.6" y="1117.5" width="5" height="5" fill="#2a2a2a"/><rect x="3516.0" y="1065.1" width="5" height="5" fill="#6a6a6a"/><rect x="3510.2" y="1047.1" width="4" height="4" fill="#3c3c3c"/><rect x="3526.1" y="1139.0" width="3" height="3" fill="#3c3c3c"/><rect x="3516.5" y="1045.1" width="3" height="3" fill="#3c3c3c"/><rect x="3523.0" y="1140.8" width="5" height="5" fill="#3c3c3c"/><rect x="3539.1" y="1142.0" width="3" height="3" fill="#6a6a6a"/><rect x="3527.1" y="1101.5" width="5" height="5" fill="#3c3c3c"/><rect x="3510.2" y="1040.5" width="4" height="4" fill="#555"/><rect x="3516.8" y="1066.6" width="4" height="4" fill="#6a6a6a"/><rect x="3522.1" y="1079.1" width="4" height="4" fill="#3c3c3c"/><rect x="3518.5" y="1077.1" width="4" height="4" fill="#8a8a8a"/><rect x="3515.5" y="1067.1" width="4" height="4" fill="#3c3c3c"/><rect x="3524.6" y="1085.2" width="4" height="4" fill="#2a2a2a"/><rect x="3521.7" y="1147.3" width="4" height="4" fill="#2a2a2a"/><rect x="3520.5" y="1094.7" width="4" height="4" fill="#3c3c3c"/><rect x="3521.0" y="1078.4" width="4" height="4" fill="#555"/><rect x="3527.4" y="1140.1" width="3" height="3" fill="#3c3c3c"/><rect x="3525.7" y="1128.1" width="4" height="4" fill="#555"/><rect x="3217.6" y="1111.6" width="4" height="4" fill="#555"/><rect x="3224.3" y="1028.8" width="4" height="4" fill="#8a8a8a"/><rect x="3234.7" y="989.0" width="4" height="4" fill="#3c3c3c"/><rect x="3221.2" y="1048.7" width="4" height="4" fill="#3c3c3c"/><rect x="3225.6" y="1041.4" width="3" height="3" fill="#8a8a8a"/><rect x="3222.7" y="1087.9" width="5" height="5" fill="#8a8a8a"/><rect x="3224.9" y="1077.9" width="4" height="4" fill="#a0a0a0"/><rect x="3223.7" y="1050.9" width="3" height="3" fill="#3c3c3c"/><rect x="3225.3" y="971.1" width="3" height="3" fill="#a0a0a0"/><rect x="3230.5" y="1040.4" width="4" height="4" fill="#555"/><rect x="3233.1" y="1004.3" width="3" height="3" fill="#2a2a2a"/><rect x="3234.4" y="1023.5" width="4" height="4" fill="#6a6a6a"/><rect x="3227.2" y="1095.5" width="3" height="3" fill="#555"/><rect x="3221.8" y="986.3" width="3" height="3" fill="#555"/><rect x="3213.5" y="1016.1" width="3" height="3" fill="#2a2a2a"/><rect x="3230.5" y="1015.4" width="4" height="4" fill="#3c3c3c"/><rect x="3221.7" y="1080.7" width="4" height="4" fill="#2a2a2a"/><rect x="3230.7" y="1094.5" width="5" height="5" fill="#a0a0a0"/><rect x="3216.8" y="1030.0" width="3" height="3" fill="#3c3c3c"/><rect x="3223.3" y="998.1" width="4" height="4" fill="#2a2a2a"/><rect x="3224.1" y="1056.5" width="3" height="3" fill="#8a8a8a"/><rect x="3220.4" y="963.6" width="4" height="4" fill="#a0a0a0"/><rect x="3221.1" y="1000.9" width="4" height="4" fill="#6a6a6a"/><rect x="3232.0" y="1068.7" width="4" height="4" fill="#2a2a2a"/><rect x="3226.2" y="1094.1" width="5" height="5" fill="#2a2a2a"/><rect x="3226.9" y="1036.6" width="4" height="4" fill="#8a8a8a"/><rect x="3216.9" y="977.6" width="4" height="4" fill="#8a8a8a"/><rect x="3218.7" y="1092.9" width="5" height="5" fill="#3c3c3c"/><rect x="3220.7" y="1075.2" width="5" height="5" fill="#a0a0a0"/><rect x="3218.4" y="1068.1" width="3" height="3" fill="#8a8a8a"/><rect x="3216.6" y="1021.1" width="5" height="5" fill="#555"/><rect x="3227.3" y="997.0" width="5" height="5" fill="#555"/><rect x="3239.2" y="1089.8" width="5" height="5" fill="#555"/><rect x="3232.0" y="1091.1" width="4" height="4" fill="#2a2a2a"/><rect x="3213.7" y="1040.0" width="5" height="5" fill="#3c3c3c"/><rect x="3228.9" y="1062.7" width="4" height="4" fill="#2a2a2a"/><rect x="3223.2" y="977.8" width="3" height="3" fill="#3c3c3c"/><rect x="3220.1" y="994.8" width="5" height="5" fill="#6a6a6a"/><rect x="3220.1" y="1080.9" width="3" height="3" fill="#2a2a2a"/><rect x="3229.1" y="1093.9" width="4" height="4" fill="#8a8a8a"/><rect x="3232.0" y="1102.5" width="3" height="3" fill="#2a2a2a"/><rect x="3230.2" y="999.6" width="3" height="3" fill="#8a8a8a"/><rect x="3221.3" y="1027.4" width="4" height="4" fill="#555"/><rect x="3227.5" y="1060.8" width="3" height="3" fill="#2a2a2a"/><rect x="3521.4" y="1162.2" width="3" height="3" fill="#555"/><rect x="3528.7" y="1143.8" width="4" height="4" fill="#8a8a8a"/><rect x="3537.5" y="1140.3" width="4" height="4" fill="#6a6a6a"/><rect x="3529.0" y="1117.2" width="3" height="3" fill="#a0a0a0"/><rect x="3527.4" y="1182.5" width="4" height="4" fill="#a0a0a0"/><rect x="3521.1" y="1169.6" width="4" height="4" fill="#3c3c3c"/><rect x="3533.7" y="1143.2" width="4" height="4" fill="#6a6a6a"/><rect x="3530.5" y="1082.4" width="4" height="4" fill="#555"/><rect x="3541.1" y="1105.4" width="3" height="3" fill="#6a6a6a"/><rect x="3529.3" y="1208.5" width="4" height="4" fill="#3c3c3c"/><rect x="3529.3" y="1123.8" width="4" height="4" fill="#3c3c3c"/><rect x="3524.9" y="1085.9" width="4" height="4" fill="#2a2a2a"/><rect x="3530.9" y="1156.3" width="3" height="3" fill="#a0a0a0"/><rect x="3529.7" y="1151.0" width="4" height="4" fill="#6a6a6a"/><rect x="3523.4" y="1181.7" width="4" height="4" fill="#a0a0a0"/><rect x="3525.0" y="1136.8" width="4" height="4" fill="#a0a0a0"/><rect x="3526.6" y="1098.3" width="3" height="3" fill="#555"/><rect x="3519.1" y="1181.6" width="5" height="5" fill="#a0a0a0"/><rect x="3532.5" y="1116.0" width="4" height="4" fill="#a0a0a0"/><rect x="3532.9" y="1136.9" width="3" height="3" fill="#2a2a2a"/><rect x="3529.6" y="1136.0" width="4" height="4" fill="#6a6a6a"/><rect x="3528.5" y="1137.5" width="3" height="3" fill="#555"/><rect x="3532.6" y="1131.7" width="4" height="4" fill="#a0a0a0"/><rect x="3525.5" y="1118.8" width="5" height="5" fill="#6a6a6a"/><rect x="3517.7" y="1168.8" width="5" height="5" fill="#6a6a6a"/><rect x="3526.8" y="1140.6" width="4" height="4" fill="#3c3c3c"/><rect x="3530.9" y="1191.9" width="3" height="3" fill="#3c3c3c"/><rect x="3524.0" y="1193.9" width="4" height="4" fill="#555"/><rect x="3528.3" y="1214.8" width="4" height="4" fill="#555"/><rect x="3528.2" y="1215.7" width="3" height="3" fill="#2a2a2a"/><rect x="3533.8" y="1084.8" width="4" height="4" fill="#8a8a8a"/><rect x="3528.6" y="1153.5" width="5" height="5" fill="#6a6a6a"/><rect x="3531.0" y="1132.6" width="5" height="5" fill="#555"/><rect x="3520.7" y="1212.1" width="3" height="3" fill="#a0a0a0"/><rect x="3522.9" y="1152.0" width="4" height="4" fill="#6a6a6a"/><rect x="3522.4" y="1201.6" width="5" height="5" fill="#6a6a6a"/><rect x="3526.1" y="1134.6" width="4" height="4" fill="#8a8a8a"/><rect x="3537.5" y="1176.3" width="3" height="3" fill="#a0a0a0"/><rect x="3533.8" y="1102.2" width="4" height="4" fill="#555"/><rect x="3515.6" y="1093.3" width="4" height="4" fill="#555"/><rect x="3506.8" y="1224.2" width="4" height="4" fill="#6a6a6a"/><rect x="3518.9" y="1227.2" width="4" height="4" fill="#8a8a8a"/><rect x="3518.3" y="1226.2" width="3" height="3" fill="#a0a0a0"/><rect x="3519.0" y="1222.8" width="3" height="3" fill="#a0a0a0"/><rect x="3516.5" y="1229.5" width="3" height="3" fill="#a0a0a0"/><rect x="3356.3" y="1237.3" width="3" height="3" fill="#6a6a6a"/><rect x="3412.2" y="1237.4" width="4" height="4" fill="#6a6a6a"/><rect x="3363.6" y="1239.6" width="4" height="4" fill="#8a8a8a"/><rect x="3414.7" y="1238.4" width="3" height="3" fill="#3c3c3c"/><rect x="3507.2" y="1232.5" width="4" height="4" fill="#2a2a2a"/><rect x="3351.1" y="1243.0" width="3" height="3" fill="#6a6a6a"/><rect x="3401.3" y="1235.6" width="4" height="4" fill="#a0a0a0"/><rect x="3487.6" y="1234.0" width="4" height="4" fill="#2a2a2a"/><rect x="3405.4" y="1232.4" width="3" height="3" fill="#8a8a8a"/><rect x="3452.8" y="1239.6" width="4" height="4" fill="#2a2a2a"/><rect x="3360.7" y="1235.7" width="3" height="3" fill="#8a8a8a"/><rect x="3437.3" y="1238.0" width="4" height="4" fill="#2a2a2a"/><rect x="3353.5" y="1239.5" width="4" height="4" fill="#3c3c3c"/><rect x="3511.1" y="1230.1" width="4" height="4" fill="#6a6a6a"/><rect x="3349.0" y="1241.6" width="3" height="3" fill="#6a6a6a"/><rect x="3470.4" y="1240.2" width="5" height="5" fill="#3c3c3c"/><rect x="3458.9" y="1229.2" width="5" height="5" fill="#a0a0a0"/><rect x="3508.3" y="1232.4" width="4" height="4" fill="#3c3c3c"/><rect x="3447.6" y="1236.6" width="4" height="4" fill="#2a2a2a"/><rect x="3444.7" y="1238.0" width="4" height="4" fill="#6a6a6a"/><rect x="3443.8" y="1232.2" width="3" height="3" fill="#2a2a2a"/><rect x="3440.1" y="1229.8" width="4" height="4" fill="#6a6a6a"/><rect x="3432.6" y="1238.6" width="4" height="4" fill="#555"/><rect x="3437.9" y="1235.4" width="4" height="4" fill="#3c3c3c"/><rect x="3391.8" y="1235.0" width="4" height="4" fill="#2a2a2a"/><rect x="3465.7" y="1232.9" width="5" height="5" fill="#6a6a6a"/><rect x="3369.6" y="1238.8" width="4" height="4" fill="#3c3c3c"/><rect x="3449.4" y="1233.9" width="4" height="4" fill="#a0a0a0"/><rect x="3461.4" y="1229.8" width="4" height="4" fill="#6a6a6a"/><rect x="3473.5" y="1237.1" width="4" height="4" fill="#a0a0a0"/><rect x="3410.5" y="1235.0" width="4" height="4" fill="#6a6a6a"/><rect x="3421.6" y="1241.0" width="3" height="3" fill="#3c3c3c"/><rect x="3396.5" y="1232.7" width="4" height="4" fill="#2a2a2a"/><rect x="3386.6" y="1236.1" width="4" height="4" fill="#a0a0a0"/><rect x="3459.7" y="1236.5" width="3" height="3" fill="#6a6a6a"/><rect x="3394.2" y="1236.0" width="3" height="3" fill="#3c3c3c"/><rect x="3500.7" y="1237.6" width="4" height="4" fill="#555"/><rect x="3479.3" y="1234.9" width="4" height="4" fill="#555"/><rect x="3372.9" y="1238.6" width="4" height="4" fill="#6a6a6a"/><rect x="3451.4" y="1231.9" width="4" height="4" fill="#a0a0a0"/><rect x="3353.0" y="1242.0" width="3" height="3" fill="#3c3c3c"/><rect x="3450.1" y="1233.2" width="3" height="3" fill="#6a6a6a"/><rect x="3399.4" y="1242.8" width="5" height="5" fill="#a0a0a0"/><rect x="3470.3" y="1232.5" width="3" height="3" fill="#a0a0a0"/><rect x="3481.3" y="1238.2" width="4" height="4" fill="#2a2a2a"/><rect x="3356.0" y="1237.1" width="5" height="5" fill="#2a2a2a"/><rect x="3505.0" y="1241.3" width="5" height="5" fill="#3c3c3c"/><rect x="3478.4" y="1236.1" width="4" height="4" fill="#2a2a2a"/><rect x="3344.1" y="1224.9" width="4" height="4" fill="#3c3c3c"/><rect x="3338.9" y="1227.0" width="4" height="4" fill="#6a6a6a"/><rect x="3334.8" y="1220.9" width="4" height="4" fill="#2a2a2a"/><rect x="3343.7" y="1220.5" width="3" height="3" fill="#a0a0a0"/><rect x="3334.3" y="1220.9" width="3" height="3" fill="#a0a0a0"/><rect x="3334.0" y="1223.2" width="3" height="3" fill="#555"/><rect x="3284.5" y="1210.0" width="5" height="5" fill="#a0a0a0"/><rect x="3211.0" y="1220.5" width="3" height="3" fill="#8a8a8a"/><rect x="3293.1" y="1220.3" width="5" height="5" fill="#6a6a6a"/><rect x="3218.7" y="1220.0" width="5" height="5" fill="#a0a0a0"/><rect x="3273.1" y="1225.9" width="4" height="4" fill="#a0a0a0"/><rect x="3282.8" y="1229.3" width="5" height="5" fill="#3c3c3c"/><rect x="3240.8" y="1218.7" width="4" height="4" fill="#2a2a2a"/><rect x="3316.0" y="1214.3" width="4" height="4" fill="#3c3c3c"/><rect x="3306.4" y="1211.2" width="4" height="4" fill="#2a2a2a"/><rect x="3292.5" y="1221.3" width="4" height="4" fill="#555"/><rect x="3320.3" y="1216.6" width="5" height="5" fill="#a0a0a0"/><rect x="3252.0" y="1217.2" width="5" height="5" fill="#8a8a8a"/><rect x="3321.3" y="1215.2" width="4" height="4" fill="#a0a0a0"/><rect x="3249.0" y="1212.7" width="4" height="4" fill="#8a8a8a"/><rect x="3295.2" y="1212.2" width="5" height="5" fill="#2a2a2a"/><rect x="3240.5" y="1213.7" width="5" height="5" fill="#8a8a8a"/><rect x="3230.9" y="1211.2" width="4" height="4" fill="#6a6a6a"/><rect x="3324.1" y="1220.6" width="3" height="3" fill="#3c3c3c"/><rect x="3330.6" y="1214.4" width="4" height="4" fill="#555"/><rect x="3313.0" y="1220.4" width="4" height="4" fill="#2a2a2a"/><rect x="3296.7" y="1223.7" width="4" height="4" fill="#6a6a6a"/><rect x="3300.7" y="1219.5" width="5" height="5" fill="#6a6a6a"/><rect x="3327.5" y="1219.5" width="4" height="4" fill="#a0a0a0"/><rect x="3212.3" y="1219.1" width="5" height="5" fill="#6a6a6a"/><rect x="3275.8" y="1219.2" width="4" height="4" fill="#8a8a8a"/><rect x="3337.3" y="1212.8" width="4" height="4" fill="#a0a0a0"/><rect x="3254.7" y="1221.5" width="4" height="4" fill="#2a2a2a"/><rect x="3242.7" y="1212.9" width="4" height="4" fill="#3c3c3c"/><rect x="3291.2" y="1217.7" width="4" height="4" fill="#a0a0a0"/><rect x="3325.2" y="1219.8" width="4" height="4" fill="#8a8a8a"/><rect x="3289.7" y="1222.7" width="4" height="4" fill="#a0a0a0"/><rect x="3297.3" y="1222.8" width="4" height="4" fill="#555"/><rect x="3308.2" y="1214.5" width="3" height="3" fill="#2a2a2a"/><rect x="3265.2" y="1224.0" width="5" height="5" fill="#a0a0a0"/><rect x="3221.8" y="1223.7" width="5" height="5" fill="#3c3c3c"/><rect x="3208.8" y="1203.8" width="3" height="3" fill="#8a8a8a"/><rect x="3193.9" y="1211.6" width="4" height="4" fill="#3c3c3c"/><rect x="3206.5" y="1211.2" width="5" height="5" fill="#2a2a2a"/><rect x="3206.5" y="1201.7" width="4" height="4" fill="#3c3c3c"/><rect x="3215.1" y="1215.2" width="5" height="5" fill="#8a8a8a"/><rect x="3202.5" y="1212.1" width="3" height="3" fill="#2a2a2a"/><rect x="3206.8" y="1201.1" width="3" height="3" fill="#6a6a6a"/><rect x="3212.5" y="1196.1" width="4" height="4" fill="#3c3c3c"/><rect x="3030.3" y="1163.0" width="4" height="4" fill="#a0a0a0"/><rect x="3040.5" y="1166.3" width="3" height="3" fill="#6a6a6a"/><rect x="3045.2" y="1163.9" width="4" height="4" fill="#8a8a8a"/><rect x="3043.9" y="1176.7" width="3" height="3" fill="#8a8a8a"/><rect x="3035.0" y="1173.8" width="4" height="4" fill="#8a8a8a"/><rect x="3037.5" y="1166.4" width="4" height="4" fill="#6a6a6a"/><rect x="3042.6" y="1163.4" width="3" height="3" fill="#555"/><rect x="3062.2" y="1179.2" width="5" height="5" fill="#3c3c3c"/><rect x="3056.5" y="1185.1" width="5" height="5" fill="#8a8a8a"/><rect x="3048.8" y="1184.0" width="5" height="5" fill="#3c3c3c"/><rect x="3051.5" y="1182.5" width="3" height="3" fill="#3c3c3c"/><rect x="3047.7" y="1181.0" width="3" height="3" fill="#555"/><rect x="3047.8" y="1174.2" width="5" height="5" fill="#3c3c3c"/><rect x="3146.4" y="1188.0" width="3" height="3" fill="#8a8a8a"/><rect x="3136.9" y="1201.9" width="3" height="3" fill="#6a6a6a"/><rect x="3145.9" y="1201.3" width="3" height="3" fill="#3c3c3c"/><rect x="3134.9" y="1198.6" width="5" height="5" fill="#6a6a6a"/><rect x="3141.7" y="1195.1" width="5" height="5" fill="#3c3c3c"/><rect x="3135.9" y="1201.8" width="5" height="5" fill="#2a2a2a"/></g><rect x="3000" y="1127" width="17" height="33" fill="#3a3a3a" opacity="0.75" filter="url(#b3)"/><rect x="3137" y="1186" width="13" height="24" fill="#3a3a3a" opacity="0.75" filter="url(#b3)"/><rect x="3205" y="1186" width="22" height="41" fill="#3a3a3a" opacity="0.75" filter="url(#b3)"/><rect x="3281.2" y="467.3" width="19.700000000000273" height="16.399999999999977" fill="#3a3a3a" opacity="0.75" filter="url(#b3)"/><rect x="3307.5" y="601.8" width="26.199999999999818" height="23.0" fill="#3a3a3a" opacity="0.75" filter="url(#b3)"/><rect x="3304.2" y="729.5" width="36.100000000000364" height="9.899999999999977" fill="#3a3a3a" opacity="0.75" filter="url(#b3)"/><rect x="3333.7" y="854.2" width="13.200000000000273" height="9.799999999999955" fill="#3a3a3a" opacity="0.75" filter="url(#b3)"/><rect x="3474.8" y="854.2" width="82.0" height="29.5" fill="#3a3a3a" opacity="0.75" filter="url(#b3)"/><rect x="3320.6" y="1024.8" width="39.40000000000009" height="16.40000000000009" fill="#3a3a3a" opacity="0.75" filter="url(#b3)"/><rect x="3333.7" y="1044.5" width="32.80000000000018" height="16.40000000000009" fill="#3a3a3a" opacity="0.75" filter="url(#b3)"/><rect x="3461.7" y="1054.3" width="42.600000000000364" height="32.799999999999955" fill="#3a3a3a" opacity="0.75" filter="url(#b3)"/><rect x="3478.1" y="1087.1" width="32.80000000000018" height="16.40000000000009" fill="#3a3a3a" opacity="0.75" filter="url(#b3)"/><rect x="3458.4" y="982.2" width="19.699999999999818" height="13.099999999999909" fill="#3a3a3a" opacity="0.75" filter="url(#b3)"/><rect x="3458.4" y="510.0" width="32.79999999999973" height="59.0" fill="#3a3a3a" opacity="0.75" filter="url(#b3)"/><rect x="3373.1" y="677.3" width="26.200000000000273" height="45.90000000000009" fill="#3a3a3a" opacity="0.75" filter="url(#b3)"/><rect x="3274.7" y="1083.3" width="22.90000000000009" height="29.5" fill="#3a3a3a" opacity="0.75" filter="url(#b3)"/><g stroke="#b0b6b4" stroke-width="1.5" opacity="0.6"><line x1="2856.1" y1="746.9" x2="3778.0" y2="608.8"/><line x1="2863.2" y1="831.0" x2="3808.2" y2="686.0"/><line x1="2870.7" y1="919.7" x2="3840.0" y2="767.2"/><line x1="2878.6" y1="1013.3" x2="3873.4" y2="852.8"/><line x1="2887.0" y1="1112.2" x2="3908.7" y2="943.0"/><line x1="2895.9" y1="1217.0" x2="3945.9" y2="1038.3"/><line x1="2905.3" y1="1328.2" x2="3985.4" y2="1139.1"/><line x1="2915.3" y1="1446.3" x2="4027.1" y2="1246.0"/><line x1="2926.0" y1="1572.1" x2="4071.5" y2="1359.4"/><line x1="2937.4" y1="1706.3" x2="4118.6" y2="1480.0"/><line x1="2949.6" y1="1849.7" x2="4168.9" y2="1608.6"/><line x1="2856.1" y1="746.9" x2="2949.6" y2="1849.7"/><line x1="2951.6" y1="732.6" x2="3077.5" y2="1824.4"/><line x1="3046.5" y1="718.4" x2="3204.1" y2="1799.4"/><line x1="3140.5" y1="704.3" x2="3329.3" y2="1774.6"/><line x1="3233.8" y1="690.4" x2="3453.1" y2="1750.1"/><line x1="3326.3" y1="676.5" x2="3575.6" y2="1725.9"/><line x1="3418.1" y1="662.7" x2="3696.8" y2="1701.9"/><line x1="3509.2" y1="649.1" x2="3816.7" y2="1678.2"/><line x1="3599.5" y1="635.6" x2="3935.4" y2="1654.8"/><line x1="3689.1" y1="622.1" x2="4052.7" y2="1631.5"/><line x1="3778.0" y1="608.8" x2="4168.9" y2="1608.6"/></g><polyline points="3333.7,345.9 3399.3,342.0 3461.7,338.7" fill="none" stroke="#ff1a1a" stroke-width="3" stroke-dasharray="4 2"/><polyline points="3218.9,447.6 3227.1,510.0" fill="none" stroke="#ff1a1a" stroke-width="3" stroke-dasharray="4 2"/><polyline points="3259.9,432.9 3340.3,429.6" fill="none" stroke="#ff1a1a" stroke-width="3" stroke-dasharray="4 2"/><polyline points="3264.8,482.1 3282.9,469.0" fill="none" stroke="#ff1a1a" stroke-width="3" stroke-dasharray="4 2"/><polyline points="3461.7,578.9 3474.8,615.0" fill="none" stroke="#ff1a1a" stroke-width="3" stroke-dasharray="4 2"/><polyline points="3494.5,641.2 3502.7,706.8" fill="none" stroke="#ff1a1a" stroke-width="3" stroke-dasharray="4 2"/><polyline points="3385.6,619.9 3399.3,718.3" fill="none" stroke="#ff1a1a" stroke-width="3" stroke-dasharray="4 2"/><polyline points="3278.0,954.3 3304.2,960.8" fill="none" stroke="#ff1a1a" stroke-width="3" stroke-dasharray="4 2"/><polyline points="3343.6,957.5 3386.2,951.0" fill="none" stroke="#ff1a1a" stroke-width="3" stroke-dasharray="4 2"/><polyline points="3399.3,916.5 3425.6,900.1" fill="none" stroke="#ff1a1a" stroke-width="3" stroke-dasharray="4 2"/><polyline points="3471.5,906.7 3484.6,900.1" fill="none" stroke="#ff1a1a" stroke-width="3" stroke-dasharray="4 2"/><polyline points="3487.9,878.8 3504.3,865.7" fill="none" stroke="#ff1a1a" stroke-width="3" stroke-dasharray="4 2"/><polyline points="3530.6,869.0 3553.5,860.8" fill="none" stroke="#ff1a1a" stroke-width="3" stroke-dasharray="4 2"/><polyline points="3502.7,846.0 3517.5,847.6" fill="none" stroke="#ff1a1a" stroke-width="3" stroke-dasharray="4 2"/><g fill="#ff30ff"><rect x="3260.0" y="436.3" width="3.5" height="3.5"/><rect x="3348.6" y="442.9" width="3.5" height="3.5"/><rect x="3360.1" y="449.4" width="3.5" height="3.5"/><rect x="3361.8" y="465.8" width="3.5" height="3.5"/><rect x="3412.6" y="424.8" width="3.5" height="3.5"/><rect x="3425.7" y="423.2" width="3.5" height="3.5"/><rect x="3458.5" y="532.1" width="3.5" height="3.5"/><rect x="3460.2" y="544.6" width="3.5" height="3.5"/><rect x="3389.6" y="646.3" width="3.5" height="3.5"/><rect x="3397.8" y="716.8" width="3.5" height="3.5"/><rect x="3266.6" y="921.6" width="3.5" height="3.5"/><rect x="3279.7" y="908.5" width="3.5" height="3.5"/><rect x="3289.6" y="921.6" width="3.5" height="3.5"/><rect x="3273.2" y="935.4" width="3.5" height="3.5"/><rect x="3315.8" y="941.3" width="3.5" height="3.5"/><rect x="3302.7" y="960.0" width="3.5" height="3.5"/><rect x="3388.0" y="945.2" width="3.5" height="3.5"/><rect x="3427.4" y="915.0" width="3.5" height="3.5"/><rect x="3433.9" y="948.5" width="3.5" height="3.5"/><rect x="3437.2" y="982.3" width="3.5" height="3.5"/><rect x="3483.1" y="890.4" width="3.5" height="3.5"/><rect x="3522.5" y="852.7" width="3.5" height="3.5"/><rect x="3552.0" y="856.0" width="3.5" height="3.5"/></g><g fill="#ff1a1a"><rect x="3437.2" y="1255.7" width="3.5" height="3.5"/><rect x="3445.4" y="1252.4" width="3.5" height="3.5"/><rect x="3452.0" y="1254.0" width="3.5" height="3.5"/><rect x="3460.2" y="1260.6" width="3.5" height="3.5"/><rect x="3468.4" y="1250.7" width="3.5" height="3.5"/><rect x="3474.9" y="1248.4" width="3.5" height="3.5"/><rect x="3483.1" y="1255.7" width="3.5" height="3.5"/><rect x="3489.7" y="1239.3" width="3.5" height="3.5"/><rect x="3495.6" y="1218.9" width="3.5" height="3.5"/></g><g stroke-width="2.5"><line x1="3433.8" y1="1122.7" x2="3437.8" y2="1145.7" stroke="#e01010"/><line x1="3433.8" y1="1122.7" x2="3452.8" y2="1119.7" stroke="#10c010"/><line x1="3433.8" y1="1122.7" x2="3433.8" y2="1116.7" stroke="#2020e0"/></g></g></svg>
<svg style="position:absolute;left:2710px;top:866px" width="16" height="20"><path d="M11 3 L4 10 L11 17 Z" fill="#555"/></svg>
<svg style="position:absolute;left:3751px;top:866px" width="16" height="20"><path d="M4 3 L11 10 L4 17 Z" fill="#555"/></svg>
<div style="position:absolute;left:2696px;top:850px;width:2px;height:2px;background:#c8c8c8"></div>
<div style="position:absolute;left:2696px;top:856px;width:2px;height:2px;background:#c8c8c8"></div>
<div style="position:absolute;left:2696px;top:862px;width:2px;height:2px;background:#c8c8c8"></div>
<div style="position:absolute;left:2696px;top:868px;width:2px;height:2px;background:#c8c8c8"></div>
<div style="position:absolute;left:2696px;top:874px;width:2px;height:2px;background:#c8c8c8"></div>
<div style="position:absolute;left:2696px;top:880px;width:2px;height:2px;background:#c8c8c8"></div>
<div style="position:absolute;left:2696px;top:886px;width:2px;height:2px;background:#c8c8c8"></div>
<div style="position:absolute;left:2696px;top:892px;width:2px;height:2px;background:#c8c8c8"></div>
<div style="position:absolute;left:2696px;top:898px;width:2px;height:2px;background:#c8c8c8"></div>
<div style="position:absolute;left:2696px;top:904px;width:2px;height:2px;background:#c8c8c8"></div>
<div style="position:absolute;right:43px;text-align:right;top:1551.87px;font:normal 28.5px/28.5px 'Liberation Sans', sans-serif;color:#1b1b1b;white-space:pre;">31 fps</div>
<div style="position:absolute;left:1897px;top:1322px;width:793px;height:152px;background:#fefefe;border:1.5px solid #bcbcbc"></div>
<div style="position:absolute;left:2005px;top:1316px;width:2px;height:2px;background:#bbb"></div>
<div style="position:absolute;left:2014px;top:1316px;width:2px;height:2px;background:#bbb"></div>
<div style="position:absolute;left:2023px;top:1316px;width:2px;height:2px;background:#bbb"></div>
<div style="position:absolute;left:2032px;top:1316px;width:2px;height:2px;background:#bbb"></div>
<div style="position:absolute;left:2041px;top:1316px;width:2px;height:2px;background:#bbb"></div>
<div style="position:absolute;left:2050px;top:1316px;width:2px;height:2px;background:#bbb"></div>
<div style="position:absolute;left:2059px;top:1316px;width:2px;height:2px;background:#bbb"></div>
<div style="position:absolute;left:2068px;top:1316px;width:2px;height:2px;background:#bbb"></div>
<div style="position:absolute;left:1899px;top:1487px;width:189px;height:48px;background:linear-gradient(#fbfbfb,#ececec);border:1.5px solid #b8b8b8;border-radius:5px"></div>
<div style="position:absolute;left:-6.5px;width:4000px;text-align:center;top:1496.87px;font:normal 28.5px/28.5px 'Liberation Sans', sans-serif;color:#1b1b1b;white-space:pre;">Add</div>
<div style="position:absolute;left:2100px;top:1487px;width:186px;height:48px;background:linear-gradient(#fbfbfb,#ececec);border:1.5px solid #b8b8b8;border-radius:5px"></div>
<div style="position:absolute;left:193.0px;width:4000px;text-align:center;top:1496.87px;font:normal 28.5px/28.5px 'Liberation Sans', sans-serif;color:#a8a8a8;white-space:pre;">Duplicate</div>
<div style="position:absolute;left:2299px;top:1487px;width:188px;height:48px;background:linear-gradient(#fbfbfb,#ececec);border:1.5px solid #b8b8b8;border-radius:5px"></div>
<div style="position:absolute;left:393.0px;width:4000px;text-align:center;top:1496.87px;font:normal 28.5px/28.5px 'Liberation Sans', sans-serif;color:#a8a8a8;white-space:pre;">Remove</div>
<div style="position:absolute;left:2499px;top:1487px;width:187px;height:48px;background:linear-gradient(#fbfbfb,#ececec);border:1.5px solid #b8b8b8;border-radius:5px"></div>
<div style="position:absolute;left:592.5px;width:4000px;text-align:center;top:1496.87px;font:normal 28.5px/28.5px 'Liberation Sans', sans-serif;color:#a8a8a8;white-space:pre;">Rename</div>
<div style="position:absolute;left:1899px;top:1549px;width:104px;height:47px;background:linear-gradient(#fbfbfb,#ececec);border:1.5px solid #b8b8b8;border-radius:5px"></div>
<div style="position:absolute;left:-49.0px;width:4000px;text-align:center;top:1558.37px;font:normal 28.5px/28.5px 'Liberation Sans', sans-serif;color:#1b1b1b;white-space:pre;">Reset</div>
<div style="position:absolute;left:1894px;top:1600px;width:1877px;height:2px;background:#222"></div>
<div style="position:absolute;left:1889px;top:1601px;width:6px;height:407px;background:linear-gradient(to right,#8a8a8a,#d0d0d0)"></div>
<div style="position:absolute;left:1895px;top:1601px;width:1876px;height:2px;background:#d8d8d8"></div>
<div style="position:absolute;left:1895px;top:1603px;width:1876px;height:72px;background:#2c2c2c;border-radius:14px 0 0 0"></div>
<div style="position:absolute;left:841px;width:4000px;text-align:center;top:1625.45px;font:bold 29px/29px 'Liberation Sans', sans-serif;color:#cfcfcf;white-space:pre;">fanglinxu@fx706hm: ~</div>
<svg style="position:absolute;left:3587px;top:1620px" width="184" height="40"><g stroke="#e0e0e0" stroke-width="2.2" fill="none"><line x1="21" y1="24" x2="37" y2="24"/><rect x="89" y="11" width="14" height="14"/><line x1="154" y1="11" x2="168" y2="25"/><line x1="168" y1="11" x2="154" y2="25"/></g></svg>
<div style="position:absolute;left:1895px;top:1675px;width:1876px;height:34px;background:#c4c3c1"></div>
<div style="position:absolute;left:1941px;top:1676px;width:2px;height:32px;background:rgba(0,0,0,0.06)"></div>
<svg style="position:absolute;left:1902px;top:1680px" width="28" height="28"><g stroke="#111" stroke-width="2" fill="none"><rect x="1" y="1" width="24" height="24"/><line x1="13" y1="1" x2="13" y2="25"/><line x1="1" y1="13" x2="25" y2="13"/></g><rect x="15" y="15" width="11" height="11" fill="#c4c3c1"/><path d="M16 18 L25 18 L20.5 23 Z" fill="#111"/></svg>
<div style="position:absolute;left:866.5px;width:4000px;text-align:center;top:1677.87px;font:normal 28.5px/28.5px 'Liberation Sans', sans-serif;color:#1a1a1a;white-space:pre;">fanglinxu@fx706hm: ~ 105x9</div>
<div style="position:absolute;left:1895px;top:1709px;width:1876px;height:299px;background:#000"></div>
<div style="position:absolute;left:1899px;top:1718.36px;font:29.55px/29.55px 'Liberation Mono', monospace;letter-spacing:0px;color:#b2b2af;white-space:pre;">anything else : stop</div>
<div style="position:absolute;left:1899px;top:1788.56px;font:29.55px/29.55px 'Liberation Mono', monospace;letter-spacing:0px;color:#b2b2af;white-space:pre;">q/z : increase/decrease max speeds by 10%</div>
<div style="position:absolute;left:1899px;top:1823.66px;font:29.55px/29.55px 'Liberation Mono', monospace;letter-spacing:0px;color:#b2b2af;white-space:pre;">w/x : increase/decrease only linear speed by 10%</div>
<div style="position:absolute;left:1899px;top:1858.76px;font:29.55px/29.55px 'Liberation Mono', monospace;letter-spacing:0px;color:#b2b2af;white-space:pre;">e/c : increase/decrease only angular speed by 10%</div>
<div style="position:absolute;left:1899px;top:1928.96px;font:29.55px/29.55px 'Liberation Mono', monospace;letter-spacing:0px;color:#b2b2af;white-space:pre;">CTRL-C to quit</div>
<div style="position:absolute;left:1897px;top:1992px;width:21px;height:20px;border:2px solid #bdbdbd;border-bottom:none"></div>
<div style="position:absolute;left:1897px;top:251px;width:12px;height:1060px;background:linear-gradient(to right,rgba(0,0,0,0.13),rgba(0,0,0,0))"></div>
<div style="position:absolute;left:1897px;top:1323px;width:12px;height:150px;background:linear-gradient(to right,rgba(0,0,0,0.10),rgba(0,0,0,0))"></div>
<div style="position:absolute;left:1895px;top:85px;width:14px;height:116px;background:linear-gradient(to right,rgba(0,0,0,0.10),rgba(0,0,0,0))"></div></body></html>
